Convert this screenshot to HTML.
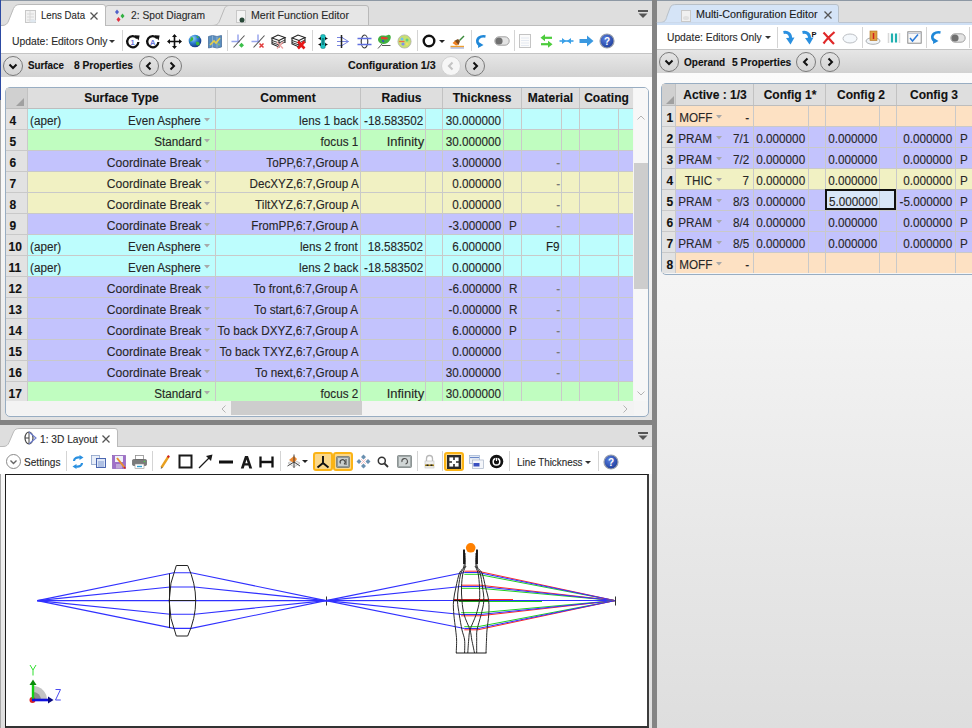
<!DOCTYPE html>
<html><head><meta charset="utf-8"><style>
html,body{margin:0;padding:0}
body{width:972px;height:728px;position:relative;overflow:hidden;background:#fff;font-family:"Liberation Sans",sans-serif}
body div{position:absolute;white-space:pre;-webkit-text-stroke:0.12px currentColor}
svg{position:absolute;overflow:visible}
</style></head><body>
<div style="left:0px;top:0px;width:652px;height:26px;background:#dedede"></div>
<div style="left:0px;top:0px;width:652px;height:1px;background:#8d98a4"></div>
<svg style="position:absolute;left:0px;top:0px;" width="652" height="27" viewBox="0 0 652 27"><path d="M105.5,25.5 L105.5,8 Q105.5,5.5 108,5.5 L231,5.5 L231,25.5 Z" fill="#e6e6e6" stroke="#b9b9b9"/><path d="M212,25.5 C217,25.5 218.5,23.5 219.5,21 L224.5,8.5 C226,5.5 227.5,5.5 231,5.5 L366,5.5 Q368.5,5.5 368.5,8 L368.5,25.5 Z" fill="#e6e6e6" stroke="#b9b9b9"/><line x1="0" y1="25.5" x2="652" y2="25.5" stroke="#bdbdbd"/><path d="M0,25.5 L2,25.5 C6,25.5 7.5,23.5 8.5,21 L13.5,8.5 C15,5.5 16.5,4.5 20,4.5 L103,4.5 Q105.5,4.5 105.5,7 L105.5,26.5 L0,26.5 Z" fill="#ffffff" stroke="#bababa"/><rect x="0" y="26" width="105" height="1" fill="#fff"/></svg>
<svg style="position:absolute;left:24px;top:9px;" width="13" height="15" viewBox="0 0 13 15"><rect x="1.5" y="1.5" width="10" height="12" fill="#f2f2f2" stroke="#c8c8c8"/><path d="M3,5h7M3,8h7M3,11h7M6,2v12" stroke="#d8d8d8"/><ellipse cx="9" cy="12" rx="3" ry="1.6" fill="#dfe8f0"/></svg>
<div style="left:40.8px;top:10.03px;font-size:10.6px;line-height:10.6px;color:#2a2a2a;transform:scaleX(0.9110);transform-origin:left 0;">Lens Data</div>
<svg style="position:absolute;left:89px;top:11px;" width="10" height="10" viewBox="0 0 10 10"><path d="M1.5,1.5L8.5,8.5M8.5,1.5L1.5,8.5" stroke="#555" stroke-width="1.3"/></svg>
<svg style="position:absolute;left:113px;top:9px;" width="13" height="14" viewBox="0 0 13 14"><path d="M4,0.5l2,2.5l-2,2.5l-2,-2.5z" fill="#5060c8"/><path d="M9.5,4.5l2,2.5l-2,2.5l-2,-2.5z" fill="#30b040"/><path d="M5.5,8l2,2.5l-2,2.5l-2,-2.5z" fill="#e03040"/></svg>
<div style="left:131px;top:10.03px;font-size:10.6px;line-height:10.6px;color:#2a2a2a;transform:scaleX(0.9667);transform-origin:left 0;">2: Spot Diagram</div>
<svg style="position:absolute;left:235px;top:9px;" width="12" height="15" viewBox="0 0 12 15"><rect x="1.5" y="1.5" width="9" height="12" fill="#f4f4f4" stroke="#c8c8c8"/><circle cx="7" cy="11" r="2.5" fill="#2a4a3a"/></svg>
<div style="left:251px;top:10.03px;font-size:10.6px;line-height:10.6px;color:#2a2a2a;transform:scaleX(1.0027);transform-origin:left 0;">Merit Function Editor</div>
<svg style="position:absolute;left:637px;top:9px;" width="12" height="10" viewBox="0 0 12 10"><rect x="1" y="1" width="10" height="2" fill="#555"/><path d="M1.5,4.5h9l-4.5,4.5z" fill="#555"/></svg>
<div style="left:0px;top:26px;width:652px;height:27px;background:#ffffff"></div>
<div style="left:0px;top:53px;width:652px;height:1px;background:#c4c4c4"></div>
<div style="left:11.5px;top:37.2px;font-size:10.4px;line-height:10.4px;color:#2a2a2a;transform:scaleX(0.9961);transform-origin:left 0;">Update: Editors Only</div>
<svg style="position:absolute;left:109px;top:40px;" width="7" height="4" viewBox="0 0 7 4"><path d="M0,0h6l-3,3z" fill="#333"/></svg>
<div style="left:122px;top:30px;width:1px;height:21px;background:#d4d4d4"></div>
<div style="left:227px;top:30px;width:1px;height:21px;background:#d4d4d4"></div>
<div style="left:312px;top:30px;width:1px;height:21px;background:#d4d4d4"></div>
<div style="left:417px;top:30px;width:1px;height:21px;background:#d4d4d4"></div>
<div style="left:471px;top:30px;width:1px;height:21px;background:#d4d4d4"></div>
<div style="left:514px;top:30px;width:1px;height:21px;background:#d4d4d4"></div>
<div style="left:0px;top:54px;width:652px;height:23px;background:linear-gradient(#e6e6e6,#d2d2d2)"></div>
<svg style="position:absolute;left:2px;top:54.5px;" width="22" height="22" viewBox="0 0 22 22"><g transform="translate(1,1)"><circle cx="10" cy="10" r="9.5" fill="none" stroke="#7a7a7a" stroke-width="1"/><path d="M6.5,8.5 L10,12 L13.5,8.5" fill="none" stroke="#111" stroke-width="2"/></g></svg>
<div style="left:27.8px;top:60.03px;font-size:10.6px;line-height:10.6px;font-weight:bold;color:#111;transform:scaleX(0.9260);transform-origin:left 0;">Surface</div>
<div style="left:73.7px;top:60.03px;font-size:10.6px;line-height:10.6px;font-weight:bold;color:#111;transform:scaleX(0.9633);transform-origin:left 0;">8 Properties</div>
<svg style="position:absolute;left:137.5px;top:54.5px;" width="22" height="22" viewBox="0 0 22 22"><g transform="translate(1,1)"><circle cx="10" cy="10" r="9.5" fill="none" stroke="#7a7a7a" stroke-width="1"/><path d="M11.5,6.5 L8,10 L11.5,13.5" fill="none" stroke="#111" stroke-width="2"/></g></svg>
<svg style="position:absolute;left:161px;top:54.5px;" width="22" height="22" viewBox="0 0 22 22"><g transform="translate(1,1)"><circle cx="10" cy="10" r="9.5" fill="none" stroke="#7a7a7a" stroke-width="1"/><path d="M8.5,6.5 L12,10 L8.5,13.5" fill="none" stroke="#111" stroke-width="2"/></g></svg>
<div style="left:348.4px;top:60.03px;font-size:10.6px;line-height:10.6px;font-weight:bold;color:#111;transform:scaleX(1.0068);transform-origin:left 0;">Configuration 1/3</div>
<svg style="position:absolute;left:440px;top:54.5px;" width="22" height="22" viewBox="0 0 22 22"><g transform="translate(1,1)"><circle cx="10" cy="10" r="9.5" fill="#f6f6f6" stroke="#d2d2d2" stroke-width="1"/><path d="M11.5,6.5 L8,10 L11.5,13.5" fill="none" stroke="#c4c4c4" stroke-width="2"/></g></svg>
<svg style="position:absolute;left:463.5px;top:54.5px;" width="22" height="22" viewBox="0 0 22 22"><g transform="translate(1,1)"><circle cx="10" cy="10" r="9.5" fill="none" stroke="#7a7a7a" stroke-width="1"/><path d="M8.5,6.5 L12,10 L8.5,13.5" fill="none" stroke="#111" stroke-width="2"/></g></svg>
<div style="left:0px;top:77px;width:652px;height:343px;background:linear-gradient(#fdfdfd,#f3f3f3 55%,#e2e2e2)"></div>
<div style="left:0px;top:0px;width:1px;height:100px;background:#2c4aa3"></div>
<div style="left:0px;top:100px;width:1px;height:628px;background:#a8a8a8"></div>
<div style="left:5px;top:87px;width:644px;height:330px;border:1px solid #98adc2;border-radius:5px;background:#f5f5f5;box-sizing:border-box"></div>
<div style="left:6px;top:88px;width:627px;height:20px;background:#dedede"></div>
<div style="left:6px;top:88px;width:21px;height:20px;background:#d0d0d0"></div>
<svg style="position:absolute;left:16px;top:98px;" width="9" height="9" viewBox="0 0 9 9"><path d="M8,0 L8,8 L0,8 Z" fill="#a0a0a0"/></svg>
<div style="left:6px;top:108px;width:627px;height:1px;background:#bdbdbd"></div>
<div style="left:27px;top:88px;width:1px;height:20px;background:#c2c2c2"></div>
<div style="left:215px;top:88px;width:1px;height:20px;background:#c2c2c2"></div>
<div style="left:360px;top:88px;width:1px;height:20px;background:#c2c2c2"></div>
<div style="left:442px;top:88px;width:1px;height:20px;background:#c2c2c2"></div>
<div style="left:521px;top:88px;width:1px;height:20px;background:#c2c2c2"></div>
<div style="left:579px;top:88px;width:1px;height:20px;background:#c2c2c2"></div>
<div style="left:-28.5px;width:300px;text-align:center;top:91.84px;font-size:12px;line-height:12px;font-weight:bold;color:#111;">Surface Type</div>
<div style="left:138px;width:300px;text-align:center;top:91.84px;font-size:12px;line-height:12px;font-weight:bold;color:#111;">Comment</div>
<div style="left:251.5px;width:300px;text-align:center;top:91.84px;font-size:12px;line-height:12px;font-weight:bold;color:#111;">Radius</div>
<div style="left:332px;width:300px;text-align:center;top:91.84px;font-size:12px;line-height:12px;font-weight:bold;color:#111;">Thickness</div>
<div style="left:400.5px;width:300px;text-align:center;top:91.84px;font-size:12px;line-height:12px;font-weight:bold;color:#111;">Material</div>
<div style="left:456.5px;width:300px;text-align:center;top:91.84px;font-size:12px;line-height:12px;font-weight:bold;color:#111;">Coating</div>
<div style="left:6px;top:109px;width:21px;height:21px;background:#e2e2e2"></div>
<div style="left:27px;top:109px;width:606px;height:21px;background:#bdfdfd"></div>
<div style="left:6px;top:129px;width:627px;height:1px;background:#c9c9c9"></div>
<div style="left:27px;top:109px;width:1px;height:21px;background:#c9c9c9"></div>
<div style="left:215px;top:109px;width:1px;height:21px;background:#c9c9c9"></div>
<div style="left:360px;top:109px;width:1px;height:21px;background:#c9c9c9"></div>
<div style="left:442px;top:109px;width:1px;height:21px;background:#c9c9c9"></div>
<div style="left:521px;top:109px;width:1px;height:21px;background:#c9c9c9"></div>
<div style="left:579px;top:109px;width:1px;height:21px;background:#c9c9c9"></div>
<div style="left:425px;top:109px;width:1px;height:21px;background:#c9c9c9"></div>
<div style="left:503px;top:109px;width:1px;height:21px;background:#c9c9c9"></div>
<div style="left:561px;top:109px;width:1px;height:21px;background:#c9c9c9"></div>
<div style="left:618px;top:109px;width:1px;height:21px;background:#c9c9c9"></div>
<div style="left:9.5px;top:114.84px;font-size:12px;line-height:12px;font-weight:bold;color:#111;">4</div>
<div style="left:30.3px;top:115.42px;font-size:12.5px;line-height:12.5px;color:#262626;transform:scaleX(0.9360);transform-origin:left 0;">(aper)</div>
<div style="right:770.7px;top:115.42px;font-size:12.5px;line-height:12.5px;color:#262626;transform:scaleX(0.9360);transform-origin:right 0;">Even Asphere</div>
<svg style="position:absolute;left:204px;top:118px;" width="7" height="4" viewBox="0 0 7 4"><path d="M0,0h6l-3,3.5z" fill="#a8a8a8"/></svg>
<div style="right:613.7px;top:115.42px;font-size:12.5px;line-height:12.5px;color:#262626;transform:scaleX(0.9360);transform-origin:right 0;">lens 1 back</div>
<div style="right:548.8px;top:115.42px;font-size:12.5px;line-height:12.5px;color:#262626;transform:scaleX(0.9360);transform-origin:right 0;">-18.583502</div>
<div style="right:471px;top:115.42px;font-size:12.5px;line-height:12.5px;color:#262626;transform:scaleX(0.9360);transform-origin:right 0;">30.000000</div>
<div style="left:6px;top:130px;width:21px;height:21px;background:#e2e2e2"></div>
<div style="left:27px;top:130px;width:606px;height:21px;background:#c0fdc0"></div>
<div style="left:6px;top:150px;width:627px;height:1px;background:#c9c9c9"></div>
<div style="left:27px;top:130px;width:1px;height:21px;background:#c9c9c9"></div>
<div style="left:215px;top:130px;width:1px;height:21px;background:#c9c9c9"></div>
<div style="left:360px;top:130px;width:1px;height:21px;background:#c9c9c9"></div>
<div style="left:442px;top:130px;width:1px;height:21px;background:#c9c9c9"></div>
<div style="left:521px;top:130px;width:1px;height:21px;background:#c9c9c9"></div>
<div style="left:579px;top:130px;width:1px;height:21px;background:#c9c9c9"></div>
<div style="left:425px;top:130px;width:1px;height:21px;background:#c9c9c9"></div>
<div style="left:503px;top:130px;width:1px;height:21px;background:#c9c9c9"></div>
<div style="left:561px;top:130px;width:1px;height:21px;background:#c9c9c9"></div>
<div style="left:618px;top:130px;width:1px;height:21px;background:#c9c9c9"></div>
<div style="left:9.5px;top:135.84px;font-size:12px;line-height:12px;font-weight:bold;color:#111;">5</div>
<div style="right:770.7px;top:136.42px;font-size:12.5px;line-height:12.5px;color:#262626;transform:scaleX(0.9360);transform-origin:right 0;">Standard</div>
<svg style="position:absolute;left:204px;top:139px;" width="7" height="4" viewBox="0 0 7 4"><path d="M0,0h6l-3,3.5z" fill="#a8a8a8"/></svg>
<div style="right:613.7px;top:136.42px;font-size:12.5px;line-height:12.5px;color:#262626;transform:scaleX(0.9360);transform-origin:right 0;">focus 1</div>
<div style="right:548px;top:136.42px;font-size:12.5px;line-height:12.5px;color:#262626;transform:scaleX(1.0376);transform-origin:right 0;">Infinity</div>
<div style="right:471px;top:136.42px;font-size:12.5px;line-height:12.5px;color:#262626;transform:scaleX(0.9360);transform-origin:right 0;">30.000000</div>
<div style="left:6px;top:151px;width:21px;height:21px;background:#e2e2e2"></div>
<div style="left:27px;top:151px;width:606px;height:21px;background:#c3c3fd"></div>
<div style="left:6px;top:171px;width:627px;height:1px;background:#c9c9c9"></div>
<div style="left:27px;top:151px;width:1px;height:21px;background:#c9c9c9"></div>
<div style="left:215px;top:151px;width:1px;height:21px;background:#c9c9c9"></div>
<div style="left:360px;top:151px;width:1px;height:21px;background:#c9c9c9"></div>
<div style="left:442px;top:151px;width:1px;height:21px;background:#c9c9c9"></div>
<div style="left:521px;top:151px;width:1px;height:21px;background:#c9c9c9"></div>
<div style="left:579px;top:151px;width:1px;height:21px;background:#c9c9c9"></div>
<div style="left:425px;top:151px;width:1px;height:21px;background:#c9c9c9"></div>
<div style="left:503px;top:151px;width:1px;height:21px;background:#c9c9c9"></div>
<div style="left:561px;top:151px;width:1px;height:21px;background:#c9c9c9"></div>
<div style="left:618px;top:151px;width:1px;height:21px;background:#c9c9c9"></div>
<div style="left:9.5px;top:156.84px;font-size:12px;line-height:12px;font-weight:bold;color:#111;">6</div>
<div style="right:770.7px;top:157.42px;font-size:12.5px;line-height:12.5px;color:#262626;transform:scaleX(0.9714);transform-origin:right 0;">Coordinate Break</div>
<svg style="position:absolute;left:204px;top:160px;" width="7" height="4" viewBox="0 0 7 4"><path d="M0,0h6l-3,3.5z" fill="#a8a8a8"/></svg>
<div style="right:613.7px;top:157.42px;font-size:12.5px;line-height:12.5px;color:#262626;transform:scaleX(0.9360);transform-origin:right 0;">ToPP,6:7,Group A</div>
<div style="right:471px;top:157.42px;font-size:12.5px;line-height:12.5px;color:#262626;transform:scaleX(0.9360);transform-origin:right 0;">3.000000</div>
<div style="right:412px;top:157.42px;font-size:12.5px;line-height:12.5px;color:#777;transform:scaleX(0.9360);transform-origin:right 0;">-</div>
<div style="left:6px;top:172px;width:21px;height:21px;background:#e2e2e2"></div>
<div style="left:27px;top:172px;width:606px;height:21px;background:#f1f1c3"></div>
<div style="left:6px;top:192px;width:627px;height:1px;background:#c9c9c9"></div>
<div style="left:27px;top:172px;width:1px;height:21px;background:#c9c9c9"></div>
<div style="left:215px;top:172px;width:1px;height:21px;background:#c9c9c9"></div>
<div style="left:360px;top:172px;width:1px;height:21px;background:#c9c9c9"></div>
<div style="left:442px;top:172px;width:1px;height:21px;background:#c9c9c9"></div>
<div style="left:521px;top:172px;width:1px;height:21px;background:#c9c9c9"></div>
<div style="left:579px;top:172px;width:1px;height:21px;background:#c9c9c9"></div>
<div style="left:425px;top:172px;width:1px;height:21px;background:#c9c9c9"></div>
<div style="left:503px;top:172px;width:1px;height:21px;background:#c9c9c9"></div>
<div style="left:561px;top:172px;width:1px;height:21px;background:#c9c9c9"></div>
<div style="left:618px;top:172px;width:1px;height:21px;background:#c9c9c9"></div>
<div style="left:9.5px;top:177.84px;font-size:12px;line-height:12px;font-weight:bold;color:#111;">7</div>
<div style="right:770.7px;top:178.42px;font-size:12.5px;line-height:12.5px;color:#262626;transform:scaleX(0.9714);transform-origin:right 0;">Coordinate Break</div>
<svg style="position:absolute;left:204px;top:181px;" width="7" height="4" viewBox="0 0 7 4"><path d="M0,0h6l-3,3.5z" fill="#a8a8a8"/></svg>
<div style="right:613.7px;top:178.42px;font-size:12.5px;line-height:12.5px;color:#262626;transform:scaleX(0.9360);transform-origin:right 0;">DecXYZ,6:7,Group A</div>
<div style="right:471px;top:178.42px;font-size:12.5px;line-height:12.5px;color:#262626;transform:scaleX(0.9360);transform-origin:right 0;">0.000000</div>
<div style="right:412px;top:178.42px;font-size:12.5px;line-height:12.5px;color:#777;transform:scaleX(0.9360);transform-origin:right 0;">-</div>
<div style="left:6px;top:193px;width:21px;height:21px;background:#e2e2e2"></div>
<div style="left:27px;top:193px;width:606px;height:21px;background:#f1f1c3"></div>
<div style="left:6px;top:213px;width:627px;height:1px;background:#c9c9c9"></div>
<div style="left:27px;top:193px;width:1px;height:21px;background:#c9c9c9"></div>
<div style="left:215px;top:193px;width:1px;height:21px;background:#c9c9c9"></div>
<div style="left:360px;top:193px;width:1px;height:21px;background:#c9c9c9"></div>
<div style="left:442px;top:193px;width:1px;height:21px;background:#c9c9c9"></div>
<div style="left:521px;top:193px;width:1px;height:21px;background:#c9c9c9"></div>
<div style="left:579px;top:193px;width:1px;height:21px;background:#c9c9c9"></div>
<div style="left:425px;top:193px;width:1px;height:21px;background:#c9c9c9"></div>
<div style="left:503px;top:193px;width:1px;height:21px;background:#c9c9c9"></div>
<div style="left:561px;top:193px;width:1px;height:21px;background:#c9c9c9"></div>
<div style="left:618px;top:193px;width:1px;height:21px;background:#c9c9c9"></div>
<div style="left:9.5px;top:198.84px;font-size:12px;line-height:12px;font-weight:bold;color:#111;">8</div>
<div style="right:770.7px;top:199.42px;font-size:12.5px;line-height:12.5px;color:#262626;transform:scaleX(0.9714);transform-origin:right 0;">Coordinate Break</div>
<svg style="position:absolute;left:204px;top:202px;" width="7" height="4" viewBox="0 0 7 4"><path d="M0,0h6l-3,3.5z" fill="#a8a8a8"/></svg>
<div style="right:613.7px;top:199.42px;font-size:12.5px;line-height:12.5px;color:#262626;transform:scaleX(0.9360);transform-origin:right 0;">TiltXYZ,6:7,Group A</div>
<div style="right:471px;top:199.42px;font-size:12.5px;line-height:12.5px;color:#262626;transform:scaleX(0.9360);transform-origin:right 0;">0.000000</div>
<div style="right:412px;top:199.42px;font-size:12.5px;line-height:12.5px;color:#777;transform:scaleX(0.9360);transform-origin:right 0;">-</div>
<div style="left:6px;top:214px;width:21px;height:21px;background:#e2e2e2"></div>
<div style="left:27px;top:214px;width:606px;height:21px;background:#c3c3fd"></div>
<div style="left:6px;top:234px;width:627px;height:1px;background:#c9c9c9"></div>
<div style="left:27px;top:214px;width:1px;height:21px;background:#c9c9c9"></div>
<div style="left:215px;top:214px;width:1px;height:21px;background:#c9c9c9"></div>
<div style="left:360px;top:214px;width:1px;height:21px;background:#c9c9c9"></div>
<div style="left:442px;top:214px;width:1px;height:21px;background:#c9c9c9"></div>
<div style="left:521px;top:214px;width:1px;height:21px;background:#c9c9c9"></div>
<div style="left:579px;top:214px;width:1px;height:21px;background:#c9c9c9"></div>
<div style="left:425px;top:214px;width:1px;height:21px;background:#c9c9c9"></div>
<div style="left:503px;top:214px;width:1px;height:21px;background:#c9c9c9"></div>
<div style="left:561px;top:214px;width:1px;height:21px;background:#c9c9c9"></div>
<div style="left:618px;top:214px;width:1px;height:21px;background:#c9c9c9"></div>
<div style="left:9.5px;top:219.84px;font-size:12px;line-height:12px;font-weight:bold;color:#111;">9</div>
<div style="right:770.7px;top:220.42px;font-size:12.5px;line-height:12.5px;color:#262626;transform:scaleX(0.9714);transform-origin:right 0;">Coordinate Break</div>
<svg style="position:absolute;left:204px;top:223px;" width="7" height="4" viewBox="0 0 7 4"><path d="M0,0h6l-3,3.5z" fill="#a8a8a8"/></svg>
<div style="right:613.7px;top:220.42px;font-size:12.5px;line-height:12.5px;color:#262626;transform:scaleX(0.9360);transform-origin:right 0;">FromPP,6:7,Group A</div>
<div style="right:471px;top:220.42px;font-size:12.5px;line-height:12.5px;color:#262626;transform:scaleX(0.9360);transform-origin:right 0;">-3.000000</div>
<div style="left:508.5px;top:220.42px;font-size:12.5px;line-height:12.5px;color:#262626;transform:scaleX(0.9360);transform-origin:left 0;">P</div>
<div style="right:412px;top:220.42px;font-size:12.5px;line-height:12.5px;color:#777;transform:scaleX(0.9360);transform-origin:right 0;">-</div>
<div style="left:6px;top:235px;width:21px;height:21px;background:#e2e2e2"></div>
<div style="left:27px;top:235px;width:606px;height:21px;background:#bdfdfd"></div>
<div style="left:6px;top:255px;width:627px;height:1px;background:#c9c9c9"></div>
<div style="left:27px;top:235px;width:1px;height:21px;background:#c9c9c9"></div>
<div style="left:215px;top:235px;width:1px;height:21px;background:#c9c9c9"></div>
<div style="left:360px;top:235px;width:1px;height:21px;background:#c9c9c9"></div>
<div style="left:442px;top:235px;width:1px;height:21px;background:#c9c9c9"></div>
<div style="left:521px;top:235px;width:1px;height:21px;background:#c9c9c9"></div>
<div style="left:579px;top:235px;width:1px;height:21px;background:#c9c9c9"></div>
<div style="left:425px;top:235px;width:1px;height:21px;background:#c9c9c9"></div>
<div style="left:503px;top:235px;width:1px;height:21px;background:#c9c9c9"></div>
<div style="left:561px;top:235px;width:1px;height:21px;background:#c9c9c9"></div>
<div style="left:618px;top:235px;width:1px;height:21px;background:#c9c9c9"></div>
<div style="left:8.5px;top:240.84px;font-size:12px;line-height:12px;font-weight:bold;color:#111;">10</div>
<div style="left:30.3px;top:241.42px;font-size:12.5px;line-height:12.5px;color:#262626;transform:scaleX(0.9360);transform-origin:left 0;">(aper)</div>
<div style="right:770.7px;top:241.42px;font-size:12.5px;line-height:12.5px;color:#262626;transform:scaleX(0.9360);transform-origin:right 0;">Even Asphere</div>
<svg style="position:absolute;left:204px;top:244px;" width="7" height="4" viewBox="0 0 7 4"><path d="M0,0h6l-3,3.5z" fill="#a8a8a8"/></svg>
<div style="right:613.7px;top:241.42px;font-size:12.5px;line-height:12.5px;color:#262626;transform:scaleX(0.9360);transform-origin:right 0;">lens 2 front</div>
<div style="right:548.8px;top:241.42px;font-size:12.5px;line-height:12.5px;color:#262626;transform:scaleX(0.9360);transform-origin:right 0;">18.583502</div>
<div style="right:471px;top:241.42px;font-size:12.5px;line-height:12.5px;color:#262626;transform:scaleX(0.9360);transform-origin:right 0;">6.000000</div>
<div style="right:412px;top:241.42px;font-size:12.5px;line-height:12.5px;color:#1e1e1e;transform:scaleX(0.9360);transform-origin:right 0;">F9</div>
<div style="left:6px;top:256px;width:21px;height:21px;background:#e2e2e2"></div>
<div style="left:27px;top:256px;width:606px;height:21px;background:#bdfdfd"></div>
<div style="left:6px;top:276px;width:627px;height:1px;background:#c9c9c9"></div>
<div style="left:27px;top:256px;width:1px;height:21px;background:#c9c9c9"></div>
<div style="left:215px;top:256px;width:1px;height:21px;background:#c9c9c9"></div>
<div style="left:360px;top:256px;width:1px;height:21px;background:#c9c9c9"></div>
<div style="left:442px;top:256px;width:1px;height:21px;background:#c9c9c9"></div>
<div style="left:521px;top:256px;width:1px;height:21px;background:#c9c9c9"></div>
<div style="left:579px;top:256px;width:1px;height:21px;background:#c9c9c9"></div>
<div style="left:425px;top:256px;width:1px;height:21px;background:#c9c9c9"></div>
<div style="left:503px;top:256px;width:1px;height:21px;background:#c9c9c9"></div>
<div style="left:561px;top:256px;width:1px;height:21px;background:#c9c9c9"></div>
<div style="left:618px;top:256px;width:1px;height:21px;background:#c9c9c9"></div>
<div style="left:8.5px;top:261.84px;font-size:12px;line-height:12px;font-weight:bold;color:#111;">11</div>
<div style="left:30.3px;top:262.42px;font-size:12.5px;line-height:12.5px;color:#262626;transform:scaleX(0.9360);transform-origin:left 0;">(aper)</div>
<div style="right:770.7px;top:262.42px;font-size:12.5px;line-height:12.5px;color:#262626;transform:scaleX(0.9360);transform-origin:right 0;">Even Asphere</div>
<svg style="position:absolute;left:204px;top:265px;" width="7" height="4" viewBox="0 0 7 4"><path d="M0,0h6l-3,3.5z" fill="#a8a8a8"/></svg>
<div style="right:613.7px;top:262.42px;font-size:12.5px;line-height:12.5px;color:#262626;transform:scaleX(0.9360);transform-origin:right 0;">lens 2 back</div>
<div style="right:548.8px;top:262.42px;font-size:12.5px;line-height:12.5px;color:#262626;transform:scaleX(0.9360);transform-origin:right 0;">-18.583502</div>
<div style="right:471px;top:262.42px;font-size:12.5px;line-height:12.5px;color:#262626;transform:scaleX(0.9360);transform-origin:right 0;">0.000000</div>
<div style="left:6px;top:277px;width:21px;height:21px;background:#e2e2e2"></div>
<div style="left:27px;top:277px;width:606px;height:21px;background:#c3c3fd"></div>
<div style="left:6px;top:297px;width:627px;height:1px;background:#c9c9c9"></div>
<div style="left:27px;top:277px;width:1px;height:21px;background:#c9c9c9"></div>
<div style="left:215px;top:277px;width:1px;height:21px;background:#c9c9c9"></div>
<div style="left:360px;top:277px;width:1px;height:21px;background:#c9c9c9"></div>
<div style="left:442px;top:277px;width:1px;height:21px;background:#c9c9c9"></div>
<div style="left:521px;top:277px;width:1px;height:21px;background:#c9c9c9"></div>
<div style="left:579px;top:277px;width:1px;height:21px;background:#c9c9c9"></div>
<div style="left:425px;top:277px;width:1px;height:21px;background:#c9c9c9"></div>
<div style="left:503px;top:277px;width:1px;height:21px;background:#c9c9c9"></div>
<div style="left:561px;top:277px;width:1px;height:21px;background:#c9c9c9"></div>
<div style="left:618px;top:277px;width:1px;height:21px;background:#c9c9c9"></div>
<div style="left:8.5px;top:282.84px;font-size:12px;line-height:12px;font-weight:bold;color:#111;">12</div>
<div style="right:770.7px;top:283.42px;font-size:12.5px;line-height:12.5px;color:#262626;transform:scaleX(0.9714);transform-origin:right 0;">Coordinate Break</div>
<svg style="position:absolute;left:204px;top:286px;" width="7" height="4" viewBox="0 0 7 4"><path d="M0,0h6l-3,3.5z" fill="#a8a8a8"/></svg>
<div style="right:613.7px;top:283.42px;font-size:12.5px;line-height:12.5px;color:#262626;transform:scaleX(0.9360);transform-origin:right 0;">To front,6:7,Group A</div>
<div style="right:471px;top:283.42px;font-size:12.5px;line-height:12.5px;color:#262626;transform:scaleX(0.9360);transform-origin:right 0;">-6.000000</div>
<div style="left:508.5px;top:283.42px;font-size:12.5px;line-height:12.5px;color:#262626;transform:scaleX(0.9360);transform-origin:left 0;">R</div>
<div style="right:412px;top:283.42px;font-size:12.5px;line-height:12.5px;color:#777;transform:scaleX(0.9360);transform-origin:right 0;">-</div>
<div style="left:6px;top:298px;width:21px;height:21px;background:#e2e2e2"></div>
<div style="left:27px;top:298px;width:606px;height:21px;background:#c3c3fd"></div>
<div style="left:6px;top:318px;width:627px;height:1px;background:#c9c9c9"></div>
<div style="left:27px;top:298px;width:1px;height:21px;background:#c9c9c9"></div>
<div style="left:215px;top:298px;width:1px;height:21px;background:#c9c9c9"></div>
<div style="left:360px;top:298px;width:1px;height:21px;background:#c9c9c9"></div>
<div style="left:442px;top:298px;width:1px;height:21px;background:#c9c9c9"></div>
<div style="left:521px;top:298px;width:1px;height:21px;background:#c9c9c9"></div>
<div style="left:579px;top:298px;width:1px;height:21px;background:#c9c9c9"></div>
<div style="left:425px;top:298px;width:1px;height:21px;background:#c9c9c9"></div>
<div style="left:503px;top:298px;width:1px;height:21px;background:#c9c9c9"></div>
<div style="left:561px;top:298px;width:1px;height:21px;background:#c9c9c9"></div>
<div style="left:618px;top:298px;width:1px;height:21px;background:#c9c9c9"></div>
<div style="left:8.5px;top:303.84px;font-size:12px;line-height:12px;font-weight:bold;color:#111;">13</div>
<div style="right:770.7px;top:304.42px;font-size:12.5px;line-height:12.5px;color:#262626;transform:scaleX(0.9714);transform-origin:right 0;">Coordinate Break</div>
<svg style="position:absolute;left:204px;top:307px;" width="7" height="4" viewBox="0 0 7 4"><path d="M0,0h6l-3,3.5z" fill="#a8a8a8"/></svg>
<div style="right:613.7px;top:304.42px;font-size:12.5px;line-height:12.5px;color:#262626;transform:scaleX(0.9360);transform-origin:right 0;">To start,6:7,Group A</div>
<div style="right:471px;top:304.42px;font-size:12.5px;line-height:12.5px;color:#262626;transform:scaleX(0.9360);transform-origin:right 0;">-0.000000</div>
<div style="left:508.5px;top:304.42px;font-size:12.5px;line-height:12.5px;color:#262626;transform:scaleX(0.9360);transform-origin:left 0;">R</div>
<div style="right:412px;top:304.42px;font-size:12.5px;line-height:12.5px;color:#777;transform:scaleX(0.9360);transform-origin:right 0;">-</div>
<div style="left:6px;top:319px;width:21px;height:21px;background:#e2e2e2"></div>
<div style="left:27px;top:319px;width:606px;height:21px;background:#c3c3fd"></div>
<div style="left:6px;top:339px;width:627px;height:1px;background:#c9c9c9"></div>
<div style="left:27px;top:319px;width:1px;height:21px;background:#c9c9c9"></div>
<div style="left:215px;top:319px;width:1px;height:21px;background:#c9c9c9"></div>
<div style="left:360px;top:319px;width:1px;height:21px;background:#c9c9c9"></div>
<div style="left:442px;top:319px;width:1px;height:21px;background:#c9c9c9"></div>
<div style="left:521px;top:319px;width:1px;height:21px;background:#c9c9c9"></div>
<div style="left:579px;top:319px;width:1px;height:21px;background:#c9c9c9"></div>
<div style="left:425px;top:319px;width:1px;height:21px;background:#c9c9c9"></div>
<div style="left:503px;top:319px;width:1px;height:21px;background:#c9c9c9"></div>
<div style="left:561px;top:319px;width:1px;height:21px;background:#c9c9c9"></div>
<div style="left:618px;top:319px;width:1px;height:21px;background:#c9c9c9"></div>
<div style="left:8.5px;top:324.84px;font-size:12px;line-height:12px;font-weight:bold;color:#111;">14</div>
<div style="right:770.7px;top:325.42px;font-size:12.5px;line-height:12.5px;color:#262626;transform:scaleX(0.9714);transform-origin:right 0;">Coordinate Break</div>
<svg style="position:absolute;left:204px;top:328px;" width="7" height="4" viewBox="0 0 7 4"><path d="M0,0h6l-3,3.5z" fill="#a8a8a8"/></svg>
<div style="right:613.7px;top:325.42px;font-size:12.5px;line-height:12.5px;color:#262626;transform:scaleX(0.9360);transform-origin:right 0;">To back DXYZ,6:7,Group A</div>
<div style="right:471px;top:325.42px;font-size:12.5px;line-height:12.5px;color:#262626;transform:scaleX(0.9360);transform-origin:right 0;">6.000000</div>
<div style="left:508.5px;top:325.42px;font-size:12.5px;line-height:12.5px;color:#262626;transform:scaleX(0.9360);transform-origin:left 0;">P</div>
<div style="right:412px;top:325.42px;font-size:12.5px;line-height:12.5px;color:#777;transform:scaleX(0.9360);transform-origin:right 0;">-</div>
<div style="left:6px;top:340px;width:21px;height:21px;background:#e2e2e2"></div>
<div style="left:27px;top:340px;width:606px;height:21px;background:#c3c3fd"></div>
<div style="left:6px;top:360px;width:627px;height:1px;background:#c9c9c9"></div>
<div style="left:27px;top:340px;width:1px;height:21px;background:#c9c9c9"></div>
<div style="left:215px;top:340px;width:1px;height:21px;background:#c9c9c9"></div>
<div style="left:360px;top:340px;width:1px;height:21px;background:#c9c9c9"></div>
<div style="left:442px;top:340px;width:1px;height:21px;background:#c9c9c9"></div>
<div style="left:521px;top:340px;width:1px;height:21px;background:#c9c9c9"></div>
<div style="left:579px;top:340px;width:1px;height:21px;background:#c9c9c9"></div>
<div style="left:425px;top:340px;width:1px;height:21px;background:#c9c9c9"></div>
<div style="left:503px;top:340px;width:1px;height:21px;background:#c9c9c9"></div>
<div style="left:561px;top:340px;width:1px;height:21px;background:#c9c9c9"></div>
<div style="left:618px;top:340px;width:1px;height:21px;background:#c9c9c9"></div>
<div style="left:8.5px;top:345.84px;font-size:12px;line-height:12px;font-weight:bold;color:#111;">15</div>
<div style="right:770.7px;top:346.42px;font-size:12.5px;line-height:12.5px;color:#262626;transform:scaleX(0.9714);transform-origin:right 0;">Coordinate Break</div>
<svg style="position:absolute;left:204px;top:349px;" width="7" height="4" viewBox="0 0 7 4"><path d="M0,0h6l-3,3.5z" fill="#a8a8a8"/></svg>
<div style="right:613.7px;top:346.42px;font-size:12.5px;line-height:12.5px;color:#262626;transform:scaleX(0.9360);transform-origin:right 0;">To back TXYZ,6:7,Group A</div>
<div style="right:471px;top:346.42px;font-size:12.5px;line-height:12.5px;color:#262626;transform:scaleX(0.9360);transform-origin:right 0;">0.000000</div>
<div style="right:412px;top:346.42px;font-size:12.5px;line-height:12.5px;color:#777;transform:scaleX(0.9360);transform-origin:right 0;">-</div>
<div style="left:6px;top:361px;width:21px;height:21px;background:#e2e2e2"></div>
<div style="left:27px;top:361px;width:606px;height:21px;background:#c3c3fd"></div>
<div style="left:6px;top:381px;width:627px;height:1px;background:#c9c9c9"></div>
<div style="left:27px;top:361px;width:1px;height:21px;background:#c9c9c9"></div>
<div style="left:215px;top:361px;width:1px;height:21px;background:#c9c9c9"></div>
<div style="left:360px;top:361px;width:1px;height:21px;background:#c9c9c9"></div>
<div style="left:442px;top:361px;width:1px;height:21px;background:#c9c9c9"></div>
<div style="left:521px;top:361px;width:1px;height:21px;background:#c9c9c9"></div>
<div style="left:579px;top:361px;width:1px;height:21px;background:#c9c9c9"></div>
<div style="left:425px;top:361px;width:1px;height:21px;background:#c9c9c9"></div>
<div style="left:503px;top:361px;width:1px;height:21px;background:#c9c9c9"></div>
<div style="left:561px;top:361px;width:1px;height:21px;background:#c9c9c9"></div>
<div style="left:618px;top:361px;width:1px;height:21px;background:#c9c9c9"></div>
<div style="left:8.5px;top:366.84px;font-size:12px;line-height:12px;font-weight:bold;color:#111;">16</div>
<div style="right:770.7px;top:367.42px;font-size:12.5px;line-height:12.5px;color:#262626;transform:scaleX(0.9714);transform-origin:right 0;">Coordinate Break</div>
<svg style="position:absolute;left:204px;top:370px;" width="7" height="4" viewBox="0 0 7 4"><path d="M0,0h6l-3,3.5z" fill="#a8a8a8"/></svg>
<div style="right:613.7px;top:367.42px;font-size:12.5px;line-height:12.5px;color:#262626;transform:scaleX(0.9360);transform-origin:right 0;">To next,6:7,Group A</div>
<div style="right:471px;top:367.42px;font-size:12.5px;line-height:12.5px;color:#262626;transform:scaleX(0.9360);transform-origin:right 0;">30.000000</div>
<div style="right:412px;top:367.42px;font-size:12.5px;line-height:12.5px;color:#777;transform:scaleX(0.9360);transform-origin:right 0;">-</div>
<div style="left:6px;top:382px;width:21px;height:20px;background:#e2e2e2"></div>
<div style="left:27px;top:382px;width:606px;height:20px;background:#c0fdc0"></div>
<div style="left:27px;top:382px;width:1px;height:20px;background:#c9c9c9"></div>
<div style="left:215px;top:382px;width:1px;height:20px;background:#c9c9c9"></div>
<div style="left:360px;top:382px;width:1px;height:20px;background:#c9c9c9"></div>
<div style="left:442px;top:382px;width:1px;height:20px;background:#c9c9c9"></div>
<div style="left:521px;top:382px;width:1px;height:20px;background:#c9c9c9"></div>
<div style="left:579px;top:382px;width:1px;height:20px;background:#c9c9c9"></div>
<div style="left:425px;top:382px;width:1px;height:20px;background:#c9c9c9"></div>
<div style="left:503px;top:382px;width:1px;height:20px;background:#c9c9c9"></div>
<div style="left:561px;top:382px;width:1px;height:20px;background:#c9c9c9"></div>
<div style="left:618px;top:382px;width:1px;height:20px;background:#c9c9c9"></div>
<div style="left:8.5px;top:387.84px;font-size:12px;line-height:12px;font-weight:bold;color:#111;">17</div>
<div style="right:770.7px;top:388.42px;font-size:12.5px;line-height:12.5px;color:#262626;transform:scaleX(0.9360);transform-origin:right 0;">Standard</div>
<svg style="position:absolute;left:204px;top:391px;" width="7" height="4" viewBox="0 0 7 4"><path d="M0,0h6l-3,3.5z" fill="#a8a8a8"/></svg>
<div style="right:613.7px;top:388.42px;font-size:12.5px;line-height:12.5px;color:#262626;transform:scaleX(0.9360);transform-origin:right 0;">focus 2</div>
<div style="right:548px;top:388.42px;font-size:12.5px;line-height:12.5px;color:#262626;transform:scaleX(1.0376);transform-origin:right 0;">Infinity</div>
<div style="right:471px;top:388.42px;font-size:12.5px;line-height:12.5px;color:#262626;transform:scaleX(0.9360);transform-origin:right 0;">30.000000</div>
<div style="left:634px;top:88px;width:14px;height:313px;background:#f7f7f7;border-top-right-radius:4px"></div>
<svg style="position:absolute;left:637px;top:115px;" width="8" height="5" viewBox="0 0 8 5"><path d="M0.5,4.5 L4,1 L7.5,4.5" fill="none" stroke="#b4b4b4" stroke-width="1"/></svg>
<div style="left:634px;top:163px;width:14px;height:126px;background:#cdcdcd"></div>
<svg style="position:absolute;left:637px;top:391px;" width="8" height="5" viewBox="0 0 8 5"><path d="M0.5,0.5 L4,4 L7.5,0.5" fill="none" stroke="#b4b4b4" stroke-width="1"/></svg>
<div style="left:6px;top:401px;width:628px;height:14px;background:#f3f3f3;border-bottom-left-radius:4px"></div>
<div style="left:231px;top:401px;width:131px;height:14px;background:#cdcdcd"></div>
<svg style="position:absolute;left:221px;top:405px;" width="5" height="8" viewBox="0 0 5 8"><path d="M4.5,0.5 L1,4 L4.5,7.5" fill="none" stroke="#b4b4b4" stroke-width="1"/></svg>
<svg style="position:absolute;left:623px;top:405px;" width="5" height="8" viewBox="0 0 5 8"><path d="M0.5,0.5 L4,4 L0.5,7.5" fill="none" stroke="#b4b4b4" stroke-width="1"/></svg>
<div style="left:0px;top:420px;width:652px;height:5px;background:#838383"></div>
<div style="left:0px;top:425px;width:652px;height:22px;background:#dedede"></div>
<svg style="position:absolute;left:0px;top:425px;" width="652" height="24" viewBox="0 0 652 24"><line x1="0" y1="21.5" x2="652" y2="21.5" stroke="#bdbdbd"/><path d="M0,21.5 L3,21.5 C6.5,21.5 8,20 9,17.5 L13.5,7 C15,4 16.5,3.5 20,3.5 L115,3.5 Q117.5,3.5 117.5,6 L117.5,23 L0,23 Z" fill="#ffffff" stroke="#bababa"/></svg>
<svg style="position:absolute;left:24px;top:431px;" width="13" height="14" viewBox="0 0 13 14"><ellipse cx="5" cy="7" rx="4" ry="6" fill="none" stroke="#444" stroke-width="1.2"/><path d="M5,1v12M1,7h4" stroke="#444"/><path d="M5,1 L12,7 L5,13" fill="none" stroke="#7080d0" stroke-width="1.2"/></svg>
<div style="left:40.3px;top:434.03px;font-size:10.6px;line-height:10.6px;color:#2a2a2a;transform:scaleX(0.9604);transform-origin:left 0;">1: 3D Layout</div>
<svg style="position:absolute;left:101px;top:434px;" width="10" height="10" viewBox="0 0 10 10"><path d="M1.5,1.5L8.5,8.5M8.5,1.5L1.5,8.5" stroke="#555" stroke-width="1.3"/></svg>
<svg style="position:absolute;left:637px;top:431px;" width="12" height="10" viewBox="0 0 12 10"><rect x="1" y="1" width="10" height="2" fill="#555"/><path d="M1.5,4.5h9l-4.5,4.5z" fill="#555"/></svg>
<div style="left:0px;top:447px;width:652px;height:27px;background:#ffffff"></div>
<svg style="position:absolute;left:5px;top:453px;" width="17" height="17" viewBox="0 0 17 17"><circle cx="8.5" cy="8.5" r="7" fill="none" stroke="#8a8a8a"/><path d="M5.5,7.5 L8.5,10.5 L11.5,7.5" fill="none" stroke="#666" stroke-width="1.4"/></svg>
<div style="left:24.4px;top:458.2px;font-size:10.4px;line-height:10.4px;color:#2a2a2a;transform:scaleX(0.9721);transform-origin:left 0;">Settings</div>
<div style="left:66px;top:451px;width:1px;height:20px;background:#d4d4d4"></div>
<div style="left:152px;top:451px;width:1px;height:20px;background:#d4d4d4"></div>
<div style="left:280px;top:451px;width:1px;height:20px;background:#d4d4d4"></div>
<div style="left:417px;top:451px;width:1px;height:20px;background:#d4d4d4"></div>
<div style="left:442px;top:451px;width:1px;height:20px;background:#d4d4d4"></div>
<div style="left:509px;top:451px;width:1px;height:20px;background:#d4d4d4"></div>
<div style="left:598px;top:451px;width:1px;height:20px;background:#d4d4d4"></div>
<div style="left:516.7px;top:458.2px;font-size:10.4px;line-height:10.4px;color:#2a2a2a;transform:scaleX(0.9476);transform-origin:left 0;">Line Thickness</div>
<svg style="position:absolute;left:585px;top:461px;" width="7" height="4" viewBox="0 0 7 4"><path d="M0,0h6l-3,3z" fill="#333"/></svg>
<div style="left:1px;top:474px;width:651px;height:254px;background:linear-gradient(#f8f8f8,#dedede)"></div>
<div style="left:5px;top:474px;width:644px;height:254px;border-style:solid;border-color:#1e1e1e #3c3c3c #333 #1e1e1e;border-width:1px 2px 2px 1px;background:#fff;box-sizing:border-box"></div>
<svg style="position:absolute;left:0px;top:0px;pointer-events:none" width="972" height="728" viewBox="0 0 972 728"><path d="M37.3,600.6 L173.605188,572.8000000000001 L191.3,572.8000000000001 L326,600.6" fill="none" stroke="#3030ff" stroke-width="1.1"/><path d="M37.3,600.6 L170.254272,587.0 L194.6,587.0 L326,600.6" fill="none" stroke="#3030ff" stroke-width="1.1"/><path d="M37.3,600.6 L169.2,600.6 L195.7,600.6 L326,600.6" fill="none" stroke="#3030ff" stroke-width="1.1"/><path d="M37.3,600.6 L170.254272,614.2 L194.6,614.2 L326,600.6" fill="none" stroke="#3030ff" stroke-width="1.1"/><path d="M37.3,600.6 L173.605188,628.4 L191.3,628.4 L326,600.6" fill="none" stroke="#3030ff" stroke-width="1.1"/><path d="M176.3,565.5 L187.7,565.5 Q203.7,600.75 187.7,636 L176.3,636 Q162.1,600.75 176.3,565.5 Z" fill="none" stroke="#222" stroke-width="1"/><path d="M169.5,573.5 V628" stroke="#222" stroke-width="1"/><path d="M169,600.5 H196" stroke="#222" stroke-width="1"/><path d="M326.5,596.5 V605.5 M615.5,596.5 V605.5" stroke="#333" stroke-width="1"/><path d="M326,600.6 L464.3,572.5" fill="none" stroke="#3030ff" stroke-width="1.1"/><path d="M464.3,574.3 L477.9,574.3 L615,600.6" fill="none" stroke="#20d020" stroke-width="1"/><path d="M464.3,571.2 L477.9,571.2 L615,600.6" fill="none" stroke="#ff2828" stroke-width="1"/><path d="M464.3,572.5 L477.9,572.5 L615,600.6" fill="none" stroke="#3030ff" stroke-width="1"/><path d="M326,600.6 L461.1,586.5" fill="none" stroke="#3030ff" stroke-width="1.1"/><path d="M461.1,588.3 L480.2,588.3 L615,600.6" fill="none" stroke="#20d020" stroke-width="1"/><path d="M461.1,585.2 L480.2,585.2 L615,600.6" fill="none" stroke="#ff2828" stroke-width="1"/><path d="M461.1,586.5 L480.2,586.5 L615,600.6" fill="none" stroke="#3030ff" stroke-width="1"/><path d="M326,600.6 L454.0,600.5" fill="none" stroke="#3030ff" stroke-width="1.1"/><path d="M454,600.5 H615" stroke="#3030ff"/><path d="M454,599.5 H513" stroke="#ff2828"/><path d="M459,601.5 H542" stroke="#20d020"/><path d="M326,600.6 L461.1,614.5" fill="none" stroke="#3030ff" stroke-width="1.1"/><path d="M461.1,612.7 L480.2,612.7 L615,600.6" fill="none" stroke="#20d020" stroke-width="1"/><path d="M461.1,615.8 L480.2,615.8 L615,600.6" fill="none" stroke="#ff2828" stroke-width="1"/><path d="M461.1,614.5 L480.2,614.5 L615,600.6" fill="none" stroke="#3030ff" stroke-width="1"/><path d="M326,600.6 L464.3,628.5" fill="none" stroke="#3030ff" stroke-width="1.1"/><path d="M464.3,626.7 L477.9,626.7 L615,600.6" fill="none" stroke="#20d020" stroke-width="1"/><path d="M464.3,629.8 L477.9,629.8 L615,600.6" fill="none" stroke="#ff2828" stroke-width="1"/><path d="M464.3,628.5 L477.9,628.5 L615,600.6" fill="none" stroke="#3030ff" stroke-width="1"/><path d="M453,600.5 H489" stroke="#111" stroke-width="1.4"/><path d="M464,549 C464.0,551.8 464.8,562.0 464,566 C463.2,570.0 460.8,569.5 459.5,573 C458.2,576.5 457.0,582.3 456,587 C455.0,591.7 453.9,596.3 453.5,601 C453.1,605.7 453.5,610.2 453.9,615 C454.3,619.8 455.2,625.8 455.7,630 C456.1,634.2 456.5,636.2 456.6,640 C456.7,643.8 456.3,650.8 456.2,653" fill="none" stroke="#2a2a2a" stroke-width="1"/><path d="M465,553 C465.0,555.2 465.7,562.7 465,566 C464.3,569.3 462.1,569.5 461,573 C459.9,576.5 459.1,582.3 458.5,587 C457.9,591.7 457.4,596.3 457.5,601 C457.6,605.7 458.6,610.2 459.3,615 C460.1,619.8 461.1,625.8 462,630 C462.9,634.2 464.2,636.2 464.6,640 C465.0,643.8 464.6,650.8 464.6,653" fill="none" stroke="#2a2a2a" stroke-width="1"/><path d="M466,566 C465.5,567.2 463.8,569.5 463,573 C462.2,576.5 461.7,582.3 461.5,587 C461.3,591.7 461.6,596.3 462,601 C462.4,605.7 462.9,610.2 464.2,615 C465.5,619.8 468.7,625.8 470,630 C471.3,634.2 471.1,636.2 471.8,640 C472.6,643.8 474.1,650.8 474.5,653" fill="none" stroke="#2a2a2a" stroke-width="1"/><path d="M477,549 C477.0,551.8 476.2,562.0 477,566 C477.8,570.0 480.6,569.5 482,573 C483.4,576.5 484.4,582.3 485.5,587 C486.6,591.7 488.2,596.3 488.7,601 C489.2,605.7 489.0,610.2 488.7,615 C488.4,619.8 487.4,625.8 487,630 C486.6,634.2 486.7,636.2 486.5,640 C486.3,643.8 486.1,650.8 486,653" fill="none" stroke="#2a2a2a" stroke-width="1"/><path d="M476,553 C476.0,555.2 475.3,562.7 476,566 C476.7,569.3 478.9,569.5 480,573 C481.1,576.5 481.9,582.3 482.5,587 C483.1,591.7 484.1,596.3 483.8,601 C483.6,605.7 482.1,610.2 481,615 C479.9,619.8 477.7,625.8 477,630 C476.3,634.2 476.8,636.2 476.7,640 C476.6,643.8 476.7,650.8 476.7,653" fill="none" stroke="#2a2a2a" stroke-width="1"/><path d="M475,566 C475.5,567.2 477.2,569.5 478,573 C478.8,576.5 479.3,582.3 479.5,587 C479.7,591.7 480.0,596.3 479.4,601 C478.8,605.7 477.6,610.2 476,615 C474.4,619.8 471.2,625.8 470,630 C468.8,634.2 469.1,636.2 468.7,640 C468.3,643.8 467.9,650.8 467.8,653" fill="none" stroke="#2a2a2a" stroke-width="1"/><path d="M456,653 H486.5" stroke="#1a1a1a" stroke-width="1"/><path d="M464,550 V564 M477,550 V564" stroke="#111" stroke-width="1.8"/><circle cx="470.7" cy="547.8" r="4.8" fill="#ff8000"/><path d="M33,700 L33,686 A14,14 0 0 1 47,700 Z" fill="#c4c4c4"/><path d="M33,700 L33,692 A8,8 0 0 1 41,700 Z" fill="#8c8c8c"/><circle cx="32.5" cy="700" r="3" fill="#e02020"/><path d="M33,700 V684" stroke="#10d010" stroke-width="2.4"/><path d="M29.5,685 L33,679.5 L36.5,685Z" fill="#0a8a0a"/><path d="M32,700 H49" stroke="#1010e0" stroke-width="2.6"/><path d="M48,696.5 L53.5,700 L48,703.5Z" fill="#0a0a80"/><path d="M30,665 L33,670 L36,665 M33,670 V675.5" fill="none" stroke="#30e030" stroke-width="1"/><path d="M55.5,689.5 H60.5 L55.5,700 H60.8" fill="none" stroke="#4a4af0" stroke-width="1"/></svg>
<div style="left:652px;top:0px;width:5px;height:728px;background:#848484"></div>
<div style="left:657px;top:0px;width:315px;height:23px;background:#dedede"></div>
<div style="left:657px;top:0px;width:315px;height:1px;background:#8d98a4"></div>
<div style="left:657px;top:22px;width:315px;height:1px;background:#a8a8a8"></div>
<div style="left:657px;top:23px;width:315px;height:2px;background:#cddff5"></div>
<svg style="position:absolute;left:657px;top:0px;" width="315" height="25" viewBox="0 0 315 25"><path d="M0,22.5 L3,22.5 C8,22.5 9,20 10,16 L13,8 C14,5 16,4.5 20,4.5 L179,4.5 Q181.5,4.5 181.5,7 L181.5,23 L0,23 Z" fill="#d5e4f7" stroke="#b8c0c8"/><rect x="0" y="22.5" width="315" height="2.5" fill="#cfe0f5"/></svg>
<svg style="position:absolute;left:680px;top:9px;" width="12" height="14" viewBox="0 0 12 14"><rect x="1.5" y="1.5" width="9" height="11" fill="#f0f0f0" stroke="#c8c8c8"/><ellipse cx="6" cy="9" rx="3" ry="2" fill="#e0e0e0"/></svg>
<div style="left:696.4px;top:9.03px;font-size:10.6px;line-height:10.6px;color:#1a1a1a;transform:scaleX(1.0165);transform-origin:left 0;">Multi-Configuration Editor</div>
<svg style="position:absolute;left:823px;top:10px;" width="10" height="10" viewBox="0 0 10 10"><path d="M1.5,1.5L8.5,8.5M8.5,1.5L1.5,8.5" stroke="#555" stroke-width="1.3"/></svg>
<div style="left:657px;top:25px;width:315px;height:24px;background:#ffffff"></div>
<div style="left:657px;top:49px;width:315px;height:1px;background:#c4c4c4"></div>
<div style="left:667.3px;top:33.2px;font-size:10.4px;line-height:10.4px;color:#2a2a2a;transform:scaleX(0.9877);transform-origin:left 0;">Update: Editors Only</div>
<svg style="position:absolute;left:765px;top:36px;" width="7" height="4" viewBox="0 0 7 4"><path d="M0,0h6l-3,3z" fill="#333"/></svg>
<div style="left:777px;top:27px;width:1px;height:21px;background:#d4d4d4"></div>
<div style="left:862px;top:27px;width:1px;height:21px;background:#d4d4d4"></div>
<div style="left:926px;top:27px;width:1px;height:21px;background:#d4d4d4"></div>
<div style="left:657px;top:50px;width:315px;height:23px;background:linear-gradient(#e6e6e6,#d2d2d2)"></div>
<svg style="position:absolute;left:658px;top:50.5px;" width="22" height="22" viewBox="0 0 22 22"><g transform="translate(1,1)"><circle cx="10" cy="10" r="9.5" fill="none" stroke="#7a7a7a" stroke-width="1"/><path d="M6.5,8.5 L10,12 L13.5,8.5" fill="none" stroke="#111" stroke-width="2"/></g></svg>
<div style="left:683.8px;top:56.53px;font-size:10.6px;line-height:10.6px;font-weight:bold;color:#111;transform:scaleX(0.9458);transform-origin:left 0;">Operand</div>
<div style="left:731.5px;top:56.53px;font-size:10.6px;line-height:10.6px;font-weight:bold;color:#111;transform:scaleX(0.9682);transform-origin:left 0;">5 Properties</div>
<svg style="position:absolute;left:795.4px;top:50.5px;" width="22" height="22" viewBox="0 0 22 22"><g transform="translate(1,1)"><circle cx="10" cy="10" r="9.5" fill="none" stroke="#7a7a7a" stroke-width="1"/><path d="M11.5,6.5 L8,10 L11.5,13.5" fill="none" stroke="#111" stroke-width="2"/></g></svg>
<svg style="position:absolute;left:819.3px;top:50.5px;" width="22" height="22" viewBox="0 0 22 22"><g transform="translate(1,1)"><circle cx="10" cy="10" r="9.5" fill="none" stroke="#7a7a7a" stroke-width="1"/><path d="M8.5,6.5 L12,10 L8.5,13.5" fill="none" stroke="#111" stroke-width="2"/></g></svg>
<div style="left:657px;top:73px;width:315px;height:655px;background:linear-gradient(#fbfbfb,#f2f2f2 40%,#dedede)"></div>
<div style="left:661px;top:83px;width:320px;height:192px;border:1px solid #98adc2;border-radius:5px;background:#f5f5f5;box-sizing:border-box"></div>
<div style="left:662px;top:84px;width:310px;height:21px;background:#dedede"></div>
<div style="left:662px;top:84px;width:14px;height:21px;background:#d0d0d0"></div>
<svg style="position:absolute;left:666px;top:96px;" width="9" height="9" viewBox="0 0 9 9"><path d="M8,0 L8,8 L0,8 Z" fill="#a0a0a0"/></svg>
<div style="left:662px;top:105px;width:310px;height:1px;background:#bdbdbd"></div>
<div style="left:675px;top:84px;width:1px;height:21px;background:#c2c2c2"></div>
<div style="left:753px;top:84px;width:1px;height:21px;background:#c2c2c2"></div>
<div style="left:825px;top:84px;width:1px;height:21px;background:#c2c2c2"></div>
<div style="left:896px;top:84px;width:1px;height:21px;background:#c2c2c2"></div>
<div style="left:565px;width:300px;text-align:center;top:88.84px;font-size:12px;line-height:12px;font-weight:bold;color:#111;">Active : 1/3</div>
<div style="left:640px;width:300px;text-align:center;top:88.84px;font-size:12px;line-height:12px;font-weight:bold;color:#111;">Config 1*</div>
<div style="left:711px;width:300px;text-align:center;top:88.84px;font-size:12px;line-height:12px;font-weight:bold;color:#111;">Config 2</div>
<div style="left:784px;width:300px;text-align:center;top:88.84px;font-size:12px;line-height:12px;font-weight:bold;color:#111;">Config 3</div>
<div style="left:662px;top:106px;width:14px;height:21px;background:#e2e2e2"></div>
<div style="left:676px;top:106px;width:296px;height:21px;background:#fde1c3"></div>
<div style="left:662px;top:126px;width:310px;height:1px;background:#c9c9c9"></div>
<div style="left:675px;top:106px;width:1px;height:21px;background:#c9c9c9"></div>
<div style="left:753px;top:106px;width:1px;height:21px;background:#c9c9c9"></div>
<div style="left:825px;top:106px;width:1px;height:21px;background:#c9c9c9"></div>
<div style="left:896px;top:106px;width:1px;height:21px;background:#c9c9c9"></div>
<div style="left:808px;top:106px;width:1px;height:21px;background:#c9c9c9"></div>
<div style="left:879px;top:106px;width:1px;height:21px;background:#c9c9c9"></div>
<div style="left:955px;top:106px;width:1px;height:21px;background:#c9c9c9"></div>
<div style="left:666.5px;top:111.84px;font-size:12px;line-height:12px;font-weight:bold;color:#111;">1</div>
<div style="right:260px;top:112.42px;font-size:12.5px;line-height:12.5px;color:#262626;transform:scaleX(0.9360);transform-origin:right 0;">MOFF</div>
<svg style="position:absolute;left:716px;top:115px;" width="7" height="4" viewBox="0 0 7 4"><path d="M0,0h6l-3,3.5z" fill="#a8a8a8"/></svg>
<div style="right:222.79999999999995px;top:112.42px;font-size:12.5px;line-height:12.5px;color:#262626;transform:scaleX(0.9360);transform-origin:right 0;">-</div>
<div style="left:662px;top:127px;width:14px;height:21px;background:#e2e2e2"></div>
<div style="left:676px;top:127px;width:296px;height:21px;background:#c3c3fd"></div>
<div style="left:662px;top:147px;width:310px;height:1px;background:#c9c9c9"></div>
<div style="left:675px;top:127px;width:1px;height:21px;background:#c9c9c9"></div>
<div style="left:753px;top:127px;width:1px;height:21px;background:#c9c9c9"></div>
<div style="left:825px;top:127px;width:1px;height:21px;background:#c9c9c9"></div>
<div style="left:896px;top:127px;width:1px;height:21px;background:#c9c9c9"></div>
<div style="left:808px;top:127px;width:1px;height:21px;background:#c9c9c9"></div>
<div style="left:879px;top:127px;width:1px;height:21px;background:#c9c9c9"></div>
<div style="left:955px;top:127px;width:1px;height:21px;background:#c9c9c9"></div>
<div style="left:666.5px;top:132.84px;font-size:12px;line-height:12px;font-weight:bold;color:#111;">2</div>
<div style="right:260px;top:133.42px;font-size:12.5px;line-height:12.5px;color:#262626;transform:scaleX(0.9360);transform-origin:right 0;">PRAM</div>
<svg style="position:absolute;left:716px;top:136px;" width="7" height="4" viewBox="0 0 7 4"><path d="M0,0h6l-3,3.5z" fill="#a8a8a8"/></svg>
<div style="right:222.79999999999995px;top:133.42px;font-size:12.5px;line-height:12.5px;color:#262626;transform:scaleX(0.9360);transform-origin:right 0;">7/1</div>
<div style="right:166.5px;top:133.42px;font-size:12.5px;line-height:12.5px;color:#262626;transform:scaleX(0.9360);transform-origin:right 0;">0.000000</div>
<div style="right:95px;top:133.42px;font-size:12.5px;line-height:12.5px;color:#262626;transform:scaleX(0.9360);transform-origin:right 0;">0.000000</div>
<div style="right:19.5px;top:133.42px;font-size:12.5px;line-height:12.5px;color:#262626;transform:scaleX(0.9360);transform-origin:right 0;">0.000000</div>
<div style="left:960px;top:133.42px;font-size:12.5px;line-height:12.5px;color:#262626;transform:scaleX(0.9360);transform-origin:left 0;">P</div>
<div style="left:662px;top:148px;width:14px;height:21px;background:#e2e2e2"></div>
<div style="left:676px;top:148px;width:296px;height:21px;background:#c3c3fd"></div>
<div style="left:662px;top:168px;width:310px;height:1px;background:#c9c9c9"></div>
<div style="left:675px;top:148px;width:1px;height:21px;background:#c9c9c9"></div>
<div style="left:753px;top:148px;width:1px;height:21px;background:#c9c9c9"></div>
<div style="left:825px;top:148px;width:1px;height:21px;background:#c9c9c9"></div>
<div style="left:896px;top:148px;width:1px;height:21px;background:#c9c9c9"></div>
<div style="left:808px;top:148px;width:1px;height:21px;background:#c9c9c9"></div>
<div style="left:879px;top:148px;width:1px;height:21px;background:#c9c9c9"></div>
<div style="left:955px;top:148px;width:1px;height:21px;background:#c9c9c9"></div>
<div style="left:666.5px;top:153.84px;font-size:12px;line-height:12px;font-weight:bold;color:#111;">3</div>
<div style="right:260px;top:154.42px;font-size:12.5px;line-height:12.5px;color:#262626;transform:scaleX(0.9360);transform-origin:right 0;">PRAM</div>
<svg style="position:absolute;left:716px;top:157px;" width="7" height="4" viewBox="0 0 7 4"><path d="M0,0h6l-3,3.5z" fill="#a8a8a8"/></svg>
<div style="right:222.79999999999995px;top:154.42px;font-size:12.5px;line-height:12.5px;color:#262626;transform:scaleX(0.9360);transform-origin:right 0;">7/2</div>
<div style="right:166.5px;top:154.42px;font-size:12.5px;line-height:12.5px;color:#262626;transform:scaleX(0.9360);transform-origin:right 0;">0.000000</div>
<div style="right:95px;top:154.42px;font-size:12.5px;line-height:12.5px;color:#262626;transform:scaleX(0.9360);transform-origin:right 0;">0.000000</div>
<div style="right:19.5px;top:154.42px;font-size:12.5px;line-height:12.5px;color:#262626;transform:scaleX(0.9360);transform-origin:right 0;">0.000000</div>
<div style="left:960px;top:154.42px;font-size:12.5px;line-height:12.5px;color:#262626;transform:scaleX(0.9360);transform-origin:left 0;">P</div>
<div style="left:662px;top:169px;width:14px;height:21px;background:#e2e2e2"></div>
<div style="left:676px;top:169px;width:296px;height:21px;background:#f1f1c3"></div>
<div style="left:662px;top:189px;width:310px;height:1px;background:#c9c9c9"></div>
<div style="left:675px;top:169px;width:1px;height:21px;background:#c9c9c9"></div>
<div style="left:753px;top:169px;width:1px;height:21px;background:#c9c9c9"></div>
<div style="left:825px;top:169px;width:1px;height:21px;background:#c9c9c9"></div>
<div style="left:896px;top:169px;width:1px;height:21px;background:#c9c9c9"></div>
<div style="left:808px;top:169px;width:1px;height:21px;background:#c9c9c9"></div>
<div style="left:879px;top:169px;width:1px;height:21px;background:#c9c9c9"></div>
<div style="left:955px;top:169px;width:1px;height:21px;background:#c9c9c9"></div>
<div style="left:666.5px;top:174.84px;font-size:12px;line-height:12px;font-weight:bold;color:#111;">4</div>
<div style="right:260px;top:175.42px;font-size:12.5px;line-height:12.5px;color:#262626;transform:scaleX(0.9360);transform-origin:right 0;">THIC</div>
<svg style="position:absolute;left:716px;top:178px;" width="7" height="4" viewBox="0 0 7 4"><path d="M0,0h6l-3,3.5z" fill="#a8a8a8"/></svg>
<div style="right:222.79999999999995px;top:175.42px;font-size:12.5px;line-height:12.5px;color:#262626;transform:scaleX(0.9360);transform-origin:right 0;">7</div>
<div style="right:166.5px;top:175.42px;font-size:12.5px;line-height:12.5px;color:#262626;transform:scaleX(0.9360);transform-origin:right 0;">0.000000</div>
<div style="right:95px;top:175.42px;font-size:12.5px;line-height:12.5px;color:#262626;transform:scaleX(0.9360);transform-origin:right 0;">0.000000</div>
<div style="right:19.5px;top:175.42px;font-size:12.5px;line-height:12.5px;color:#262626;transform:scaleX(0.9360);transform-origin:right 0;">0.000000</div>
<div style="left:960px;top:175.42px;font-size:12.5px;line-height:12.5px;color:#262626;transform:scaleX(0.9360);transform-origin:left 0;">P</div>
<div style="left:662px;top:190px;width:14px;height:21px;background:#e2e2e2"></div>
<div style="left:676px;top:190px;width:296px;height:21px;background:#c3c3fd"></div>
<div style="left:662px;top:210px;width:310px;height:1px;background:#c9c9c9"></div>
<div style="left:675px;top:190px;width:1px;height:21px;background:#c9c9c9"></div>
<div style="left:753px;top:190px;width:1px;height:21px;background:#c9c9c9"></div>
<div style="left:825px;top:190px;width:1px;height:21px;background:#c9c9c9"></div>
<div style="left:896px;top:190px;width:1px;height:21px;background:#c9c9c9"></div>
<div style="left:808px;top:190px;width:1px;height:21px;background:#c9c9c9"></div>
<div style="left:879px;top:190px;width:1px;height:21px;background:#c9c9c9"></div>
<div style="left:955px;top:190px;width:1px;height:21px;background:#c9c9c9"></div>
<div style="left:666.5px;top:195.84px;font-size:12px;line-height:12px;font-weight:bold;color:#111;">5</div>
<div style="right:260px;top:196.42px;font-size:12.5px;line-height:12.5px;color:#262626;transform:scaleX(0.9360);transform-origin:right 0;">PRAM</div>
<svg style="position:absolute;left:716px;top:199px;" width="7" height="4" viewBox="0 0 7 4"><path d="M0,0h6l-3,3.5z" fill="#a8a8a8"/></svg>
<div style="right:222.79999999999995px;top:196.42px;font-size:12.5px;line-height:12.5px;color:#262626;transform:scaleX(0.9360);transform-origin:right 0;">8/3</div>
<div style="right:166.5px;top:196.42px;font-size:12.5px;line-height:12.5px;color:#262626;transform:scaleX(0.9360);transform-origin:right 0;">0.000000</div>
<div style="right:19.5px;top:196.42px;font-size:12.5px;line-height:12.5px;color:#262626;transform:scaleX(0.9360);transform-origin:right 0;">-5.000000</div>
<div style="left:960px;top:196.42px;font-size:12.5px;line-height:12.5px;color:#262626;transform:scaleX(0.9360);transform-origin:left 0;">P</div>
<div style="left:662px;top:211px;width:14px;height:21px;background:#e2e2e2"></div>
<div style="left:676px;top:211px;width:296px;height:21px;background:#c3c3fd"></div>
<div style="left:662px;top:231px;width:310px;height:1px;background:#c9c9c9"></div>
<div style="left:675px;top:211px;width:1px;height:21px;background:#c9c9c9"></div>
<div style="left:753px;top:211px;width:1px;height:21px;background:#c9c9c9"></div>
<div style="left:825px;top:211px;width:1px;height:21px;background:#c9c9c9"></div>
<div style="left:896px;top:211px;width:1px;height:21px;background:#c9c9c9"></div>
<div style="left:808px;top:211px;width:1px;height:21px;background:#c9c9c9"></div>
<div style="left:879px;top:211px;width:1px;height:21px;background:#c9c9c9"></div>
<div style="left:955px;top:211px;width:1px;height:21px;background:#c9c9c9"></div>
<div style="left:666.5px;top:216.84px;font-size:12px;line-height:12px;font-weight:bold;color:#111;">6</div>
<div style="right:260px;top:217.42px;font-size:12.5px;line-height:12.5px;color:#262626;transform:scaleX(0.9360);transform-origin:right 0;">PRAM</div>
<svg style="position:absolute;left:716px;top:220px;" width="7" height="4" viewBox="0 0 7 4"><path d="M0,0h6l-3,3.5z" fill="#a8a8a8"/></svg>
<div style="right:222.79999999999995px;top:217.42px;font-size:12.5px;line-height:12.5px;color:#262626;transform:scaleX(0.9360);transform-origin:right 0;">8/4</div>
<div style="right:166.5px;top:217.42px;font-size:12.5px;line-height:12.5px;color:#262626;transform:scaleX(0.9360);transform-origin:right 0;">0.000000</div>
<div style="right:95px;top:217.42px;font-size:12.5px;line-height:12.5px;color:#262626;transform:scaleX(0.9360);transform-origin:right 0;">0.000000</div>
<div style="right:19.5px;top:217.42px;font-size:12.5px;line-height:12.5px;color:#262626;transform:scaleX(0.9360);transform-origin:right 0;">0.000000</div>
<div style="left:960px;top:217.42px;font-size:12.5px;line-height:12.5px;color:#262626;transform:scaleX(0.9360);transform-origin:left 0;">P</div>
<div style="left:662px;top:232px;width:14px;height:21px;background:#e2e2e2"></div>
<div style="left:676px;top:232px;width:296px;height:21px;background:#c3c3fd"></div>
<div style="left:662px;top:252px;width:310px;height:1px;background:#c9c9c9"></div>
<div style="left:675px;top:232px;width:1px;height:21px;background:#c9c9c9"></div>
<div style="left:753px;top:232px;width:1px;height:21px;background:#c9c9c9"></div>
<div style="left:825px;top:232px;width:1px;height:21px;background:#c9c9c9"></div>
<div style="left:896px;top:232px;width:1px;height:21px;background:#c9c9c9"></div>
<div style="left:808px;top:232px;width:1px;height:21px;background:#c9c9c9"></div>
<div style="left:879px;top:232px;width:1px;height:21px;background:#c9c9c9"></div>
<div style="left:955px;top:232px;width:1px;height:21px;background:#c9c9c9"></div>
<div style="left:666.5px;top:237.84px;font-size:12px;line-height:12px;font-weight:bold;color:#111;">7</div>
<div style="right:260px;top:238.42px;font-size:12.5px;line-height:12.5px;color:#262626;transform:scaleX(0.9360);transform-origin:right 0;">PRAM</div>
<svg style="position:absolute;left:716px;top:241px;" width="7" height="4" viewBox="0 0 7 4"><path d="M0,0h6l-3,3.5z" fill="#a8a8a8"/></svg>
<div style="right:222.79999999999995px;top:238.42px;font-size:12.5px;line-height:12.5px;color:#262626;transform:scaleX(0.9360);transform-origin:right 0;">8/5</div>
<div style="right:166.5px;top:238.42px;font-size:12.5px;line-height:12.5px;color:#262626;transform:scaleX(0.9360);transform-origin:right 0;">0.000000</div>
<div style="right:95px;top:238.42px;font-size:12.5px;line-height:12.5px;color:#262626;transform:scaleX(0.9360);transform-origin:right 0;">0.000000</div>
<div style="right:19.5px;top:238.42px;font-size:12.5px;line-height:12.5px;color:#262626;transform:scaleX(0.9360);transform-origin:right 0;">0.000000</div>
<div style="left:960px;top:238.42px;font-size:12.5px;line-height:12.5px;color:#262626;transform:scaleX(0.9360);transform-origin:left 0;">P</div>
<div style="left:662px;top:253px;width:14px;height:20px;background:#e2e2e2"></div>
<div style="left:676px;top:253px;width:296px;height:20px;background:#fde1c3"></div>
<div style="left:675px;top:253px;width:1px;height:20px;background:#c9c9c9"></div>
<div style="left:753px;top:253px;width:1px;height:20px;background:#c9c9c9"></div>
<div style="left:825px;top:253px;width:1px;height:20px;background:#c9c9c9"></div>
<div style="left:896px;top:253px;width:1px;height:20px;background:#c9c9c9"></div>
<div style="left:808px;top:253px;width:1px;height:20px;background:#c9c9c9"></div>
<div style="left:879px;top:253px;width:1px;height:20px;background:#c9c9c9"></div>
<div style="left:955px;top:253px;width:1px;height:20px;background:#c9c9c9"></div>
<div style="left:666.5px;top:258.84px;font-size:12px;line-height:12px;font-weight:bold;color:#111;">8</div>
<div style="right:260px;top:259.42px;font-size:12.5px;line-height:12.5px;color:#262626;transform:scaleX(0.9360);transform-origin:right 0;">MOFF</div>
<svg style="position:absolute;left:716px;top:262px;" width="7" height="4" viewBox="0 0 7 4"><path d="M0,0h6l-3,3.5z" fill="#a8a8a8"/></svg>
<div style="right:222.79999999999995px;top:259.42px;font-size:12.5px;line-height:12.5px;color:#262626;transform:scaleX(0.9360);transform-origin:right 0;">-</div>
<div style="left:825px;top:189px;width:71px;height:21px;border:2px solid #111;background:#d8e6f8;box-sizing:border-box"></div>
<div style="left:879px;top:191px;width:1px;height:17px;background:#c9c9c9"></div>
<div style="left:828.5px;top:196.42px;font-size:12.5px;line-height:12.5px;color:#262626;transform:scaleX(0.9360);transform-origin:left 0;">5.000000</div>
<svg style="position:absolute;left:124.8px;top:33.3px;" width="16" height="16" viewBox="0 0 16 16"><path d="M12.2,5.2 A5.6,5.6 0 1 0 13.4,9" fill="none" stroke="#111" stroke-width="2.3"/><path d="M9.8,2.2 L14.6,2.6 L13.6,7.4 Z" fill="#111"/><text x="7.6" y="11.6" font-family="Liberation Sans" font-weight="bold" font-size="7.5" fill="#6a78d8" text-anchor="middle">1</text></svg>
<svg style="position:absolute;left:145.3px;top:33.3px;" width="16" height="16" viewBox="0 0 16 16"><path d="M12.2,5.2 A5.6,5.6 0 1 0 13.4,9" fill="none" stroke="#111" stroke-width="2.3"/><path d="M9.8,2.2 L14.6,2.6 L13.6,7.4 Z" fill="#111"/><text x="7.6" y="11.6" font-family="Liberation Sans" font-weight="bold" font-size="7.5" fill="#6a78d8" text-anchor="middle">A</text></svg>
<svg style="position:absolute;left:166.5px;top:33.8px;" width="15" height="15" viewBox="0 0 15 15"><path d="M7.5,1.5V13.5M1.5,7.5H13.5" stroke="#111" stroke-width="1.6"/><path d="M7.5,0 L10,3 L5,3Z M7.5,15 L10,12 L5,12Z M0,7.5 L3,5 L3,10Z M15,7.5 L12,5 L12,10Z" fill="#111"/></svg>
<svg style="position:absolute;left:187.6px;top:34.3px;" width="14" height="14" viewBox="0 0 14 14"><defs><radialGradient id="gl" cx="0.35" cy="0.3" r="0.75"><stop offset="0" stop-color="#9fd8ff"/><stop offset="0.5" stop-color="#2a7bd0"/><stop offset="1" stop-color="#12307a"/></radialGradient></defs><circle cx="7" cy="7" r="6.3" fill="url(#gl)"/><path d="M3,3.5 C5,2.5 6,4.5 5,6 C4,7.5 2.5,7 1.5,8 Z M8,8 C10,7 12,8.5 11.5,10.5 C10,12 8.5,11.5 8,10Z M8.5,2 C10,2 11,3 10.5,4 C9.5,4.5 8.5,3.5 8.5,2Z" fill="#3cb83c"/></svg>
<svg style="position:absolute;left:207.8px;top:34.8px;" width="14" height="13" viewBox="0 0 14 13"><path d="M0.5,1.5 L4.5,0.5 L9,1.5 L13.5,0.5 L13.5,12 L9,13 L4.5,12 L0.5,13Z" fill="#5a8fc0" stroke="#4a6f9a" stroke-width="0.8"/><path d="M4.5,0.5V12 M9,1.5V13" stroke="#9ab6d4" stroke-width="0.8"/><path d="M2,10 L6,6 L8,8 L12,3" fill="none" stroke="#e8d048" stroke-width="1.6"/><path d="M9,8 L12,9 L11,11Z" fill="#8cc060"/></svg>
<svg style="position:absolute;left:231.0px;top:33.8px;" width="15" height="15" viewBox="0 0 15 15"><path d="M0.5,7.5 H9 M7,0.5 V8.5" stroke="#9aa6ee" stroke-width="1.5"/><path d="M2.5,13.5 L13.5,1.5" stroke="#555" stroke-width="1.1"/><path d="M10.5,8.8 L13,11.3 L10.5,13.8 L8,11.3Z" fill="#3cc04a"/></svg>
<svg style="position:absolute;left:251.0px;top:33.8px;" width="15" height="15" viewBox="0 0 15 15"><path d="M0.5,7.5 H9 M7,0.5 V8.5" stroke="#9aa6ee" stroke-width="1.5"/><path d="M2.5,13.5 L13.5,1.5" stroke="#555" stroke-width="1.1"/><path d="M8.5,9.5 L12.5,13.5 M12.5,9.5 L8.5,13.5" stroke="#e03a3a" stroke-width="1.5"/></svg>
<svg style="position:absolute;left:270.8px;top:33.8px;" width="16" height="15" viewBox="0 0 16 15"><path d="M1,4 L7,1 L14,3.5 L8,6.5Z" fill="#fff" stroke="#222" stroke-width="1.1"/><path d="M1,4 V10 L8,13 V6.5 M14,3.5 V9" fill="none" stroke="#222" stroke-width="1.1"/><path d="M1,6.5 L8,9 L14,6 M1,8.5 L8,11 L14,8" fill="none" stroke="#222" stroke-width="0.9"/><path d="M6,8 L12,14.5 M12,8 L6,14.5" stroke="#f0a0a0" stroke-width="1.2"/></svg>
<svg style="position:absolute;left:291.0px;top:33.8px;" width="16" height="15" viewBox="0 0 16 15"><path d="M1,4 L7,1 L14,3.5 L8,6.5Z" fill="#fff" stroke="#222" stroke-width="1.1"/><path d="M1,4 V10 L8,13 V6.5 M14,3.5 V9" fill="none" stroke="#222" stroke-width="1.1"/><path d="M1,6.5 L8,9 L14,6 M1,8.5 L8,11 L14,8" fill="none" stroke="#222" stroke-width="0.9"/><path d="M7,7.5 L13.5,14.5 M13.5,7.5 L7,14.5" stroke="#e81818" stroke-width="2.6"/></svg>
<svg style="position:absolute;left:316.8px;top:33.8px;" width="12" height="15" viewBox="0 0 12 15"><path d="M4,1 Q6,0 8,1 L8.5,4 L7.5,7.5 L8.5,11 L8,14 Q6,15 4,14 L3.5,11 L4.5,7.5 L3.5,4Z" fill="#1cc4c4" stroke="#168888" stroke-width="0.6"/><path d="M1,4.5 L4,3 L4,6Z M11,4.5 L8,3 L8,6Z M1,10.5 L4,9 L4,12Z M11,10.5 L8,9 L8,12Z" fill="#111"/><path d="M6,4V11" stroke="#0a7070" stroke-width="1.4"/></svg>
<svg style="position:absolute;left:336.0px;top:33.8px;" width="14" height="15" viewBox="0 0 14 15"><path d="M1,3.5 H7 M1,7.5 H12.5 M1,11.5 H7 M6,3.5 L12.5,7.5 L6,11.5" fill="none" stroke="#7884e0" stroke-width="1"/><path d="M5.5,1 V14" stroke="#222" stroke-width="1.5"/></svg>
<svg style="position:absolute;left:356.5px;top:33.8px;" width="15" height="15" viewBox="0 0 15 15"><ellipse cx="7.5" cy="7.5" rx="3.3" ry="6.5" fill="none" stroke="#333" stroke-width="1.1"/><path d="M0.5,4.5 H14.5 M0.5,10.5 H14.5" stroke="#6070e0" stroke-width="1.3"/></svg>
<svg style="position:absolute;left:376.5px;top:33.8px;" width="15" height="15" viewBox="0 0 15 15"><path d="M2,3 C5,0 8,3 11,1 C14,0 14.5,4 13,6 C11,10 6,11 3,9 C0.5,7 0.5,5 2,3Z" fill="#40b040"/><path d="M4,3 C6,2 8,4 10,3 L11,5 C8,6 6,5 4,5Z" fill="#e04030"/><path d="M5,6 C7,6 8,7 7,8 C6,8.5 4.5,7.5 5,6Z" fill="#3050c0"/><path d="M1,14.5 L5,10 M5,11.5 H13.5" stroke="#444" stroke-width="0.9"/></svg>
<svg style="position:absolute;left:397.1px;top:33.8px;" width="15" height="15" viewBox="0 0 15 15"><circle cx="7.5" cy="7.5" r="6.6" fill="#c8e070" stroke="#b0b0b0" stroke-width="0.8"/><circle cx="5" cy="5" r="1.5" fill="#70c0f0"/><circle cx="10" cy="6" r="1.5" fill="#60d080"/><circle cx="6" cy="10" r="1.6" fill="#8090f0"/><path d="M2,7.5 H7.5" stroke="#f07040" stroke-width="1.2"/><circle cx="10" cy="10" r="1.3" fill="#f0e060"/></svg>
<svg style="position:absolute;left:422.3px;top:34.3px;" width="14" height="14" viewBox="0 0 14 14"><circle cx="7" cy="7" r="5.3" fill="none" stroke="#111" stroke-width="2.4"/></svg>
<svg style="position:absolute;left:438.5px;top:40px;" width="7" height="4" viewBox="0 0 7 4"><path d="M0,0h6l-3,3z" fill="#222"/></svg>
<svg style="position:absolute;left:449.5px;top:33.8px;" width="15" height="15" viewBox="0 0 15 15"><path d="M9,6 L13.5,1.5 L14.5,2.5 L10,7Z" fill="#3a8a3a"/><path d="M4,7 L8,5 L10,7 L8.5,11 Z" fill="#7a4a20"/><path d="M2.5,9 L5,7 L8.5,11 L6,11.5Z" fill="#f08020"/><path d="M0.5,12.5 H14" stroke="#f0a030" stroke-width="1.4"/><path d="M0.5,14 H14" stroke="#7080c0" stroke-width="0.8"/></svg>
<svg style="position:absolute;left:473.8px;top:33.8px;" width="14" height="15" viewBox="0 0 14 15"><path d="M11.5,2.5 C6,1.5 2.5,4.5 3.5,8.5 C4,10 5,11 6.5,11.5" fill="none" stroke="#2088d8" stroke-width="2.6"/><path d="M4,14 L9.5,11 L4.5,8Z" fill="#2088d8"/></svg>
<svg style="position:absolute;left:493.6px;top:36.3px;" width="16" height="10" viewBox="0 0 16 10"><rect x="0.8" y="0.8" width="14.4" height="8.4" rx="4.2" fill="#e4e4e4" stroke="#9a9a9a" stroke-width="0.9"/><circle cx="5" cy="5" r="3.6" fill="#707070"/></svg>
<svg style="position:absolute;left:519.0px;top:34.3px;" width="12" height="14" viewBox="0 0 12 14"><rect x="0.5" y="0.5" width="11" height="13" fill="#fbfbfb" stroke="#c4c4c4"/><path d="M2,4H10M2,6.5H10M2,9H10M2,11.5H10" stroke="#dfe6f0" stroke-width="0.8"/></svg>
<svg style="position:absolute;left:539.5px;top:34.3px;" width="13" height="14" viewBox="0 0 13 14"><path d="M12,3.8 H4.5" stroke="#4ccc3c" stroke-width="2.2"/><path d="M0.5,3.8 L5,0.3 L5,7.3Z" fill="#4ccc3c"/><path d="M1,10.2 H8.5" stroke="#4ccc3c" stroke-width="2.2"/><path d="M12.5,10.2 L8,6.7 L8,13.7Z" fill="#4ccc3c"/></svg>
<svg style="position:absolute;left:558.8px;top:37.3px;" width="15" height="8" viewBox="0 0 15 8"><path d="M0.5,4 H14.5" stroke="#3aa0e8" stroke-width="1.6"/><path d="M7,4 L3,1 L3,7Z M8,4 L12,1 L12,7Z" fill="#3aa0e8"/></svg>
<svg style="position:absolute;left:579.3px;top:35.3px;" width="15" height="12" viewBox="0 0 15 12"><path d="M0.5,6 H9" stroke="#3a98e0" stroke-width="4"/><path d="M14.5,6 L8,0.5 L8,11.5Z" fill="#3a98e0"/></svg>
<svg style="position:absolute;left:599.0px;top:33.0px;" width="16" height="16" viewBox="0 0 16 16"><defs><radialGradient id="hg1" cx="0.4" cy="0.35" r="0.7"><stop offset="0" stop-color="#5a80e0"/><stop offset="1" stop-color="#1a3a98"/></radialGradient></defs><circle cx="8" cy="8" r="7" fill="url(#hg1)" stroke="#9aa0aa" stroke-width="1.2"/><text x="8" y="12" font-family="Liberation Sans" font-weight="bold" font-size="10" fill="#fff" text-anchor="middle">?</text></svg>
<svg style="position:absolute;left:781.7px;top:29.5px;" width="14" height="16" viewBox="0 0 14 16"><path d="M1.5,2.5 C6,1.5 9,4.5 8.5,9" fill="none" stroke="#2a90e0" stroke-width="3"/><path d="M4,8 L8.5,14.5 L12.5,7.5Z" fill="#2a90e0"/></svg>
<svg style="position:absolute;left:800.5px;top:29.5px;" width="14" height="16" viewBox="0 0 14 16"><path d="M1.5,2.5 C6,1.5 9,4.5 8.5,9" fill="none" stroke="#2a90e0" stroke-width="3"/><path d="M4,8 L8.5,14.5 L12.5,7.5Z" fill="#2a90e0"/><text x="10.5" y="6.5" font-family="Liberation Sans" font-weight="bold" font-size="7.5" fill="#111">P</text></svg>
<svg style="position:absolute;left:822.3px;top:30.5px;" width="14" height="14" viewBox="0 0 14 14"><path d="M1.5,1.5 C5,5 9,10 12,13 M12.5,1 C8,5 4,9 1.5,12.5" fill="none" stroke="#e02828" stroke-width="2.2"/></svg>
<svg style="position:absolute;left:842.0px;top:31.5px;" width="16" height="12" viewBox="0 0 16 12"><ellipse cx="8" cy="6.5" rx="7" ry="4.5" fill="#f4f8fc" stroke="#b4b8bc" stroke-width="0.9"/></svg>
<svg style="position:absolute;left:865.0px;top:30.0px;" width="16" height="15" viewBox="0 0 16 15"><ellipse cx="8" cy="11" rx="7" ry="3.3" fill="#f0f4f8" stroke="#a4a8ac" stroke-width="0.9"/><rect x="5" y="1" width="7" height="9.5" fill="#e0a040" stroke="#b07020" stroke-width="0.6"/><path d="M8.5,3V9" stroke="#d02020" stroke-width="1.5"/></svg>
<svg style="position:absolute;left:886.7px;top:31.5px;" width="14" height="12" viewBox="0 0 14 12"><path d="M1.5,1V11 M12.5,1V11" stroke="#d8d8d8" stroke-width="1.5"/><path d="M5,1.5V10.5 M9,1.5V10.5" stroke="#20b0b0" stroke-width="2.2"/></svg>
<svg style="position:absolute;left:907.0px;top:31.0px;" width="15" height="13" viewBox="0 0 15 13"><rect x="0.8" y="0.8" width="13.4" height="11.4" fill="#f8f8f8" stroke="#808080" stroke-width="0.9"/><path d="M0.8,2.5H14.2" stroke="#c0c8d8"/><path d="M3,7 L5.5,10 L11,3.5" fill="none" stroke="#2a7ad8" stroke-width="1.5"/></svg>
<svg style="position:absolute;left:929.3px;top:30.0px;" width="14" height="15" viewBox="0 0 14 15"><path d="M11.5,2.5 C6,1.5 2.5,4.5 3.5,8.5 C4,10 5,11 6.5,11.5" fill="none" stroke="#2088d8" stroke-width="2.6"/><path d="M4,14 L9.5,11 L4.5,8Z" fill="#2088d8"/></svg>
<svg style="position:absolute;left:950.0px;top:32.5px;" width="16" height="10" viewBox="0 0 16 10"><rect x="0.8" y="0.8" width="14.4" height="8.4" rx="4.2" fill="#e4e4e4" stroke="#9a9a9a" stroke-width="0.9"/><circle cx="5" cy="5" r="3.6" fill="#707070"/></svg>
<div style="left:969px;top:27px;width:1px;height:21px;background:#d4d4d4"></div>
<svg style="position:absolute;left:71.5px;top:454.5px;" width="12" height="14" viewBox="0 0 12 14"><path d="M2,6 C2,3 5,2 8,2.5" fill="none" stroke="#2a90e0" stroke-width="2.2"/><path d="M11.5,2.5 L7.5,0 L7.5,5Z" fill="#2a90e0"/><path d="M10,8 C10,11 7,12 4,11.5" fill="none" stroke="#2a90e0" stroke-width="2.2"/><path d="M0.5,11.5 L4.5,9 L4.5,14Z" fill="#2a90e0"/></svg>
<svg style="position:absolute;left:90.5px;top:455.0px;" width="15" height="13" viewBox="0 0 15 13"><rect x="0.5" y="0.5" width="8" height="9" fill="#e8eef8" stroke="#8aa0c8" stroke-width="0.8"/><rect x="5.5" y="3.5" width="9" height="9" fill="#dde6f6" stroke="#3a58a8" stroke-width="0.9"/><path d="M7,7H13M7,9H13M7,11H13" stroke="#5a78c0" stroke-width="0.7"/></svg>
<svg style="position:absolute;left:112.0px;top:454.5px;" width="14" height="14" viewBox="0 0 14 14"><rect x="0.5" y="0.5" width="13" height="13" fill="#a070c8" stroke="#8050b0" stroke-width="0.6"/><rect x="3" y="1" width="8" height="6" fill="#eef2f8"/><rect x="4" y="9" width="6" height="4.5" fill="#c0a8d8"/><path d="M5,3 L12.5,12.5" stroke="#e89030" stroke-width="2"/><path d="M12,12 L13.5,13.5" stroke="#d02020" stroke-width="1.5"/></svg>
<svg style="position:absolute;left:132.0px;top:454.5px;" width="15" height="14" viewBox="0 0 15 14"><rect x="3.5" y="0.5" width="8" height="4" fill="#fff" stroke="#909090" stroke-width="0.8"/><rect x="0.5" y="4.5" width="14" height="6" rx="1" fill="#7a7a7a" stroke="#555" stroke-width="0.6"/><rect x="3" y="9" width="9" height="4.5" fill="#fff" stroke="#909090" stroke-width="0.6"/><path d="M5,11.5H10" stroke="#30a0d0" stroke-width="1.4"/><circle cx="12.5" cy="6.5" r="0.8" fill="#50d050"/></svg>
<svg style="position:absolute;left:160.4px;top:454.5px;" width="10" height="14" viewBox="0 0 10 14"><path d="M1.5,12.5 L8.5,1.5" stroke="#e8a020" stroke-width="2.4"/><path d="M7.8,2.5 L9,0.7" stroke="#d02020" stroke-width="2.2"/><path d="M1,13.5 L2,12" stroke="#666" stroke-width="1.2"/></svg>
<svg style="position:absolute;left:177.5px;top:454.0px;" width="15" height="15" viewBox="0 0 15 15"><rect x="1.5" y="1.5" width="12" height="12" fill="none" stroke="#1a1a1a" stroke-width="2"/></svg>
<svg style="position:absolute;left:198.0px;top:454.0px;" width="15" height="15" viewBox="0 0 15 15"><path d="M1,14 L12.5,2.5" stroke="#1a1a1a" stroke-width="1.3"/><path d="M14.5,0.5 L8,2 L13,7Z" fill="#1a1a1a"/></svg>
<svg style="position:absolute;left:219.0px;top:458.5px;" width="14" height="6" viewBox="0 0 14 6"><rect x="0" y="1.5" width="14" height="3" fill="#111"/></svg>
<svg style="position:absolute;left:240.2px;top:454.5px;" width="13" height="14" viewBox="0 0 13 14"><path d="M0.8,13.5 L5,1 H8 L12.2,13.5 H9.3 L8.4,10.6 H4.6 L3.7,13.5Z M5.3,8.3 H7.7 L6.5,4.5Z" fill="#1a1a1a"/></svg>
<svg style="position:absolute;left:258.8px;top:455.5px;" width="15" height="12" viewBox="0 0 15 12"><path d="M1.5,0.5V11.5 M13.5,0.5V11.5 M1.5,6H13.5" stroke="#111" stroke-width="2.3"/></svg>
<svg style="position:absolute;left:286.0px;top:454.0px;" width="16" height="15" viewBox="0 0 16 15"><path d="M2,9 L8,6 L14,9 L8,13Z" fill="#f0f0f0" stroke="#b0b0b0" stroke-width="0.7"/><path d="M3,6 L8,2 L11,5 L8,9Z" fill="#f08a30"/><path d="M8,0.5V14 M1.5,12 L8,8 L14,12" fill="none" stroke="#333" stroke-width="0.9"/></svg>
<svg style="position:absolute;left:302px;top:460px;" width="7" height="4" viewBox="0 0 7 4"><path d="M0,0h6l-3,3z" fill="#222"/></svg>
<div style="left:313px;top:452px;width:20px;height:19px;background:#fbd88a;border:2px solid #fbb416;border-radius:3px;box-sizing:border-box"></div>
<div style="left:333px;top:452px;width:20px;height:19px;background:#fbd88a;border:2px solid #fbb416;border-radius:3px;box-sizing:border-box"></div>
<svg style="position:absolute;left:315.8px;top:454.5px;" width="14" height="14" viewBox="0 0 14 14"><path d="M7,1V8 L1.5,12.5 M7,8 L12.5,12.5" fill="none" stroke="#111" stroke-width="1.9"/></svg>
<svg style="position:absolute;left:336.0px;top:455.5px;" width="14" height="12" viewBox="0 0 14 12"><rect x="0.5" y="0.5" width="13" height="11" rx="1" fill="#909898" stroke="#6a7070" stroke-width="0.7"/><rect x="2" y="2" width="10" height="8" fill="#c8cece"/><path d="M4.5,7.5 A2.5,2.5 0 1 1 8,8.3" fill="none" stroke="#444" stroke-width="1.1"/><path d="M10,3V9" stroke="#444"/></svg>
<svg style="position:absolute;left:355.9px;top:454.0px;" width="15" height="15" viewBox="0 0 15 15"><path d="M7.5,0.5 L10,3 L7.5,5.5 L5,3Z M7.5,9.5 L10,12 L7.5,14.5 L5,12Z M0.5,7.5 L3,5 L5.5,7.5 L3,10Z M9.5,7.5 L12,5 L14.5,7.5 L12,10Z" fill="#6a90b0"/><path d="M5,5 L10,10 M10,5 L5,10" stroke="#f0a0a0" stroke-width="0.6"/></svg>
<svg style="position:absolute;left:377.3px;top:455.5px;" width="12" height="12" viewBox="0 0 12 12"><circle cx="4.8" cy="4.8" r="3.5" fill="none" stroke="#333" stroke-width="1.5"/><path d="M7.5,7.5 L11,11" stroke="#333" stroke-width="1.8"/></svg>
<svg style="position:absolute;left:396.5px;top:455.0px;" width="15" height="13" viewBox="0 0 15 13"><rect x="0.5" y="0.5" width="14" height="12" rx="1" fill="#a0a8a8" stroke="#707878" stroke-width="0.7"/><rect x="2" y="2" width="11" height="9" fill="#d0d6d6"/><path d="M5,7 A2.8,2.8 0 1 1 8.5,9" fill="none" stroke="#555" stroke-width="1.1"/></svg>
<svg style="position:absolute;left:423.7px;top:454.0px;" width="11" height="15" viewBox="0 0 11 15"><path d="M2.5,7 V4.5 A3,3 0 0 1 8.5,4.5 V7" fill="none" stroke="#b8b8b8" stroke-width="1.3"/><rect x="1" y="7" width="9" height="7" fill="#f0f0f0" stroke="#c0c0c0" stroke-width="0.6"/><path d="M1,11.3H10" stroke="#b08a10" stroke-width="1.6"/><path d="M2.5,11.3H4.5M6.5,11.3H8.5" stroke="#222" stroke-width="1.6"/></svg>
<div style="left:444px;top:452px;width:20px;height:19px;background:#fbd88a;border:2px solid #fbb416;border-radius:3px;box-sizing:border-box"></div>
<svg style="position:absolute;left:447.0px;top:454.5px;" width="14" height="14" viewBox="0 0 14 14"><rect x="1.2" y="1.2" width="11.6" height="11.6" fill="#fff" stroke="#2a2a2a" stroke-width="2.4"/><path d="M7,2V5 M7,9V12 M2,7H5 M9,7H12" stroke="#2a2a2a" stroke-width="1.6"/></svg>
<svg style="position:absolute;left:468.5px;top:454.5px;" width="15" height="14" viewBox="0 0 15 14"><rect x="0.5" y="0.5" width="10" height="8" fill="#eef2f8" stroke="#9ab0d0" stroke-width="0.7"/><path d="M1,2.5H10" stroke="#6a88c8" stroke-width="1.2"/><rect x="3.5" y="5" width="11" height="8.5" fill="#f4f6fa" stroke="#a8b4c8" stroke-width="0.7"/><rect x="4.5" y="8" width="6" height="3.5" fill="#3a50c0"/></svg>
<svg style="position:absolute;left:489.1px;top:454.0px;" width="15" height="15" viewBox="0 0 15 15"><circle cx="7.5" cy="7.5" r="6.8" fill="#111"/><circle cx="7.5" cy="7.8" r="3.3" fill="none" stroke="#fff" stroke-width="1.5"/><path d="M7.5,3.5V7.5" stroke="#111" stroke-width="2.2"/><path d="M7.5,4V7" stroke="#fff" stroke-width="1.2"/></svg>
<svg style="position:absolute;left:602.5px;top:453.5px;" width="16" height="16" viewBox="0 0 16 16"><defs><radialGradient id="hg2" cx="0.4" cy="0.35" r="0.7"><stop offset="0" stop-color="#5a80e0"/><stop offset="1" stop-color="#1a3a98"/></radialGradient></defs><circle cx="8" cy="8" r="7" fill="url(#hg2)" stroke="#9aa0aa" stroke-width="1.2"/><text x="8" y="12" font-family="Liberation Sans" font-weight="bold" font-size="10" fill="#fff" text-anchor="middle">?</text></svg>
</body></html>
